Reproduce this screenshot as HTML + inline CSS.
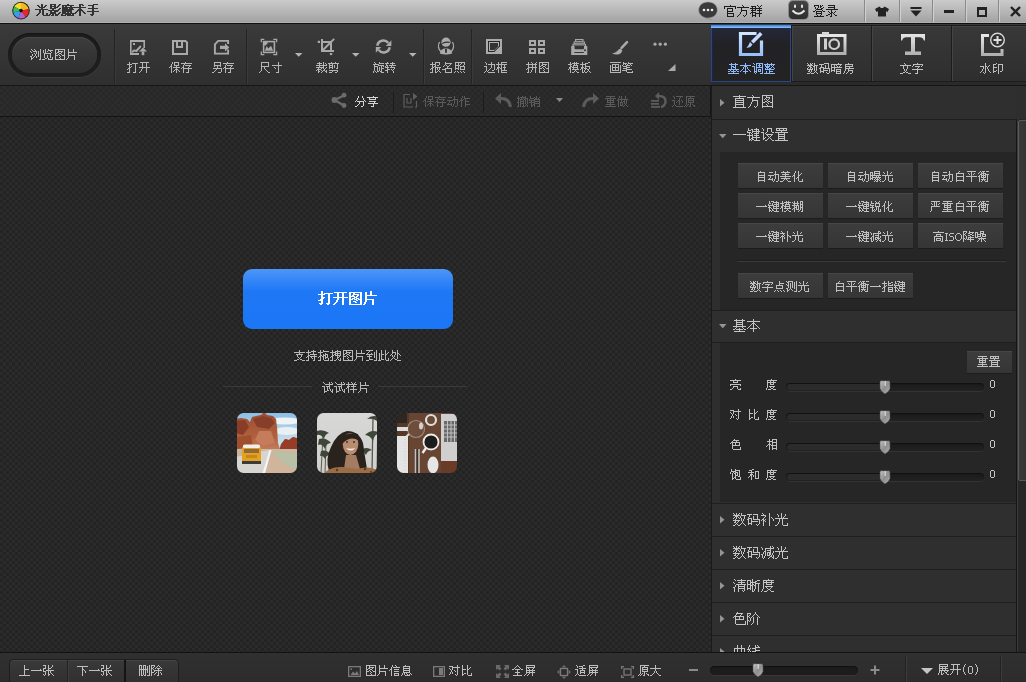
<!DOCTYPE html><html><head><meta charset="utf-8">
<style>
*{margin:0;padding:0;box-sizing:border-box}
html,body{width:1026px;height:682px;overflow:hidden;background:#2a2a2a;font-family:"Liberation Sans",sans-serif;font-size:12px;color:#bebebe}
.a{position:absolute}
.t{position:absolute;white-space:nowrap;line-height:12px;font-size:12px}
#title{left:0;top:0;width:1026px;height:23px;background:linear-gradient(#cbcbcb,#a3a3a3 95%,#b0b0b0 95%);}
#tline{left:0;top:23px;width:1026px;height:1px;background:#101010}
#tb{left:0;top:24px;width:1026px;height:61px;background:linear-gradient(#3a3a3a,#2f2f2f)}
#tbline{left:0;top:85px;width:1026px;height:1px;background:#161616}
.checker{background-color:#232323;background-image:conic-gradient(#2b2b2b 25%,#232323 0 50%,#2b2b2b 0 75%,#232323 0);background-size:6px 6px;background-position:0 0}
#canvas{left:0;top:86px;width:711px;height:566px}
#tb2{left:0;top:116px;width:711px;height:1px;background:#141414}
#panel{left:711px;top:86px;width:315px;height:566px;background:#2e2e2e}
#status{left:0;top:652px;width:1026px;height:30px;background:linear-gradient(#303030,#2c2c2c);border-top:1px solid #121212}
.lbl{position:absolute;white-space:nowrap;line-height:12px;font-size:12px;color:#c4c4c4}
.sep{position:absolute;width:1px;background:#242424;box-shadow:1px 0 0 #3a3a3a}
.wsep{position:absolute;top:0;width:1px;height:22px;background:#8a8a8a;box-shadow:1px 0 0 #d0d0d0}
svg{position:absolute;overflow:visible}
.hdr{left:712px;width:304px;background:#2f2f2f}
.hline{left:712px;width:304px;height:1px;background:#1f1f1f}
.btn{position:absolute;width:85px;height:25px;line-height:26px;text-align:center;font-size:12px;color:#c0c0c0;background:linear-gradient(#3d3d3d,#353535);box-shadow:inset 0 1px 0 #464646,0 1px 0 #1c1c1c;white-space:nowrap}
.track{position:absolute;width:198px;height:8px;border-radius:4px;background:linear-gradient(#1a1a1a,#222);box-shadow:inset 0 1px 1px #111,0 1px 0 #333}

</style></head><body>
<!-- TITLE BAR -->
<div id="title" class="a"></div>
<div id="tline" class="a"></div>
<svg style="left:11px;top:1px" width="20" height="20" viewBox="0 0 20 20">
 <circle cx="10" cy="9.6" r="8.8" fill="#1e1e1e"></circle>
 <path d="M10 9.6 L10 1.8 A7.8 7.8 0 0 1 17.6 8.2Z" fill="#f5b818"></path>
 <path d="M10 9.6 L3.3 5.6 A7.8 7.8 0 0 1 10 1.8Z" fill="#f6dc30"></path>
 <path d="M10 9.6 L17.6 8.2 A7.8 7.8 0 0 1 14.6 15.9Z" fill="#e22a2a"></path>
 <path d="M10 9.6 L14.6 15.9 A7.8 7.8 0 0 1 7.2 16.9Z" fill="#b260c8"></path>
 <path d="M10 9.6 L7.2 16.9 A7.8 7.8 0 0 1 2.3 11.5Z" fill="#3a9ef0"></path>
 <path d="M10 9.6 L2.3 11.5 A7.8 7.8 0 0 1 3.3 5.6Z" fill="#3cc052"></path>
 <circle cx="10" cy="9.6" r="1.8" fill="#111"></circle>
</svg>
<div class="t" style="left:35px;top:3px;font-size:13px;line-height:13px;font-weight:bold;color:#333"></div>

<svg style="left:698px;top:1px" width="21" height="19" viewBox="0 0 21 19"><path d="M10 1 C15.5 1 19.3 4.6 19.3 9 C19.3 13.4 15.5 17 10 17 L9.5 17 L14 19 L6.5 16.5 C3 15.3 0.7 12.5 0.7 9 C0.7 4.6 4.5 1 10 1Z" fill="#3a3a3a" stroke="#9a9a9a" stroke-width="0.6"></path><circle cx="6" cy="9" r="1.3" fill="#f0f0f0"></circle><circle cx="10" cy="9" r="1.3" fill="#f0f0f0"></circle><circle cx="14" cy="9" r="1.3" fill="#f0f0f0"></circle></svg>
<div class="t" style="left:724px;top:4px;font-size:13px;line-height:13px;color:#1c1c1c"></div>
<div class="a" style="left:789px;top:1px;width:19px;height:18px;border-radius:4px;background:linear-gradient(#444,#2e2e2e);box-shadow:0 0 0 1px #8a8a8a"></div>
<svg style="left:789px;top:1px" width="19" height="18"><rect x="5" y="3.5" width="2" height="3.5" rx="1" fill="#e6e6e6"></rect><rect x="12" y="3.5" width="2" height="3.5" rx="1" fill="#e6e6e6"></rect><path d="M3.5 9.5 Q9.5 16 15.5 9.5" stroke="#e6e6e6" stroke-width="2" fill="none"></path></svg>
<div class="t" style="left:813px;top:4px;font-size:13px;line-height:13px;color:#1c1c1c"></div>

<div class="wsep" style="left:864px"></div>
<div class="wsep" style="left:899px"></div>
<div class="wsep" style="left:932px"></div>
<div class="wsep" style="left:965px"></div>
<div class="wsep" style="left:998px"></div>
<svg style="left:875px;top:6px" width="14" height="11"><path d="M4.5 0.5 L6 2 L8 2 L9.5 0.5 L14 3 L12.5 6 L11 5.3 L11 10.5 L3 10.5 L3 5.3 L1.5 6 L0 3Z" fill="#222"></path></svg>
<svg style="left:910px;top:6px" width="12" height="11"><rect x="0.5" y="1" width="11" height="2" fill="#222"></rect><path d="M0.5 4.5 L11.5 4.5 L6 10.5Z" fill="#222"></path></svg>
<div class="a" style="left:944px;top:10px;width:10px;height:2.6px;background:#222"></div>
<div class="a" style="left:977px;top:7px;width:10px;height:9.5px;border:2px solid #222;border-top-width:3px"></div>
<svg style="left:1010px;top:6px" width="11" height="11"><path d="M1 1 L10 10 M10 1 L1 10" stroke="#222" stroke-width="2.4"></path></svg>

<!-- TOOLBAR -->
<div id="tb" class="a"></div>
<div id="tbline" class="a"></div>
<!-- browse button -->
<div class="a" style="left:8px;top:33px;width:93px;height:44px;border-radius:22px;background:#1d1d1d;box-shadow:inset 0 1px 1px #151515,0 1px 0 #3a3a3a"></div>
<div class="a" style="left:12px;top:37px;width:85px;height:36px;border-radius:18px;background:linear-gradient(#3c3c3c,#2e2e2e);box-shadow:inset 0 1px 0 #484848"></div>
<div class="t" style="left:30px;top:48px;color:#bdbdbd"></div>
<div class="sep" style="left:114px;top:29px;height:55px"></div>
<div class="sep" style="left:246px;top:29px;height:55px"></div>
<div class="sep" style="left:423px;top:29px;height:55px"></div>
<div class="sep" style="left:471px;top:29px;height:55px"></div>
<!-- icons -->
<svg style="left:129px;top:39px" width="18" height="17" fill="#a9a9a9">
 <rect x="1" y="1" width="1.6" height="15"></rect><rect x="1" y="1" width="15" height="2"></rect><rect x="14.4" y="1" width="1.6" height="8"></rect><rect x="1" y="14" width="9" height="2"></rect>
 <rect x="4" y="4" width="2" height="2"></rect>
 <path d="M3.8 12.6 Q4.6 11.2 6 11.6 L7.4 12 L11.3 7.6" fill="none" stroke="#a9a9a9" stroke-width="2" stroke-linecap="round"></path>
 <path d="M10 12.6 L14 8.4 L18 12.6Z"></path><rect x="12.7" y="12.4" width="2.6" height="3.8"></rect>
</svg>
<svg style="left:172px;top:40px" width="16" height="16" fill="none" stroke="#a9a9a9" stroke-width="2">
 <path d="M1 1 L13.5 1 L15 2.5 L15 14 L1 14Z"></path><path d="M5 0 L5 7 L10 7 L10 0"></path>
</svg>
<svg style="left:213px;top:39px" width="17" height="17" fill="none" stroke="#a9a9a9" stroke-width="1.9">
 <path d="M15.1 5 V1.9 H5.2 L1.9 5.4 V14.6 H15.1 V10.5"></path>
 <path d="M7 6.8 L12 6.8 L12 4.2 L16.3 8.4 L12 12.6 L12 10.1 L7 10.1Z" fill="#a9a9a9" stroke="none"></path>
</svg>
<svg style="left:260px;top:38px" width="18" height="18" fill="none" stroke="#a9a9a9" stroke-width="1.3">
 <path d="M1.3 4.3 L1.3 1.3 L4.3 1.3 M13.3 1.3 L16.6 1.3 L16.6 4.3 M16.6 13.6 L16.6 16.6 L13.3 16.6 M4.3 16.6 L1.3 16.6 L1.3 13.6"></path>
 <rect x="3.6" y="3.6" width="10.8" height="10.8" stroke-width="1.6"></rect>
 <path d="M4.8 12.8 L6.8 8 L8.3 10.5 L11 7.8 L13.2 12.8Z" fill="#a9a9a9" stroke="none"></path><path d="M4 4 L7.5 4 L7.5 5.5 L5.5 7.5 L4 7.5Z" fill="#a9a9a9" stroke="none"></path>
</svg>
<svg style="left:295px;top:53px" width="8" height="4"><path d="M0 0 L7.5 0 L3.75 3.8Z" fill="#b4b4b4"></path></svg>
<svg style="left:317px;top:38px" width="18" height="18" fill="#a9a9a9">
 <rect x="4" y="1" width="2" height="13"></rect><rect x="4" y="12" width="13" height="2"></rect><rect x="5" y="3" width="10" height="2"></rect><rect x="13" y="3" width="2" height="9"></rect>
 <path d="M5.5 12.5 L13.5 4.5" stroke="#a9a9a9" stroke-width="2"></path><path d="M14 4 L17.2 0.8" stroke="#a9a9a9" stroke-width="1.8"></path>
 <rect x="0.7" y="2.8" width="2.3" height="2.2"></rect><rect x="12.9" y="15" width="2.3" height="2.1"></rect>
</svg>
<svg style="left:352px;top:53px" width="8" height="4"><path d="M0 0 L7.5 0 L3.75 3.8Z" fill="#b4b4b4"></path></svg>
<svg style="left:376px;top:39px" width="16" height="16" fill="none" stroke="#a9a9a9" stroke-width="2.5">
 <path d="M1.3 6.8 A6.2 6.2 0 0 1 12.3 4"></path><path d="M13.7 8.2 A6.2 6.2 0 0 1 2.7 11"></path>
 <path d="M9.8 6.9 L15.4 6.9 L15.4 1.3Z" fill="#a9a9a9" stroke="none"></path><path d="M5.2 8.1 L-0.2 8.1 L-0.2 13.7Z" fill="#a9a9a9" stroke="none"></path>
</svg>
<svg style="left:409px;top:53px" width="8" height="4"><path d="M0 0 L7.5 0 L3.75 3.8Z" fill="#b4b4b4"></path></svg>
<svg style="left:437px;top:37px" width="18" height="18">
 <path d="M2.6 5 A7.6 7.6 0 1 0 15.4 5" fill="none" stroke="#a9a9a9" stroke-width="1.3"></path>
 <path d="M4.4 10.5 L4 6" stroke="#333" stroke-width="1.5"></path><path d="M13.6 10.5 L14 6" stroke="#333" stroke-width="1.5"></path>
 <circle cx="9" cy="5.2" r="4.6" fill="#ababab"></circle><path d="M5.2 6.4 Q9 4.6 12.6 5.4" stroke="#2e2e2e" stroke-width="1.1" fill="none"></path>
 <path d="M2.8 16.6 Q3.5 11.6 9 11.2 Q14.5 11.6 15.2 16.6 Q9 18.4 2.8 16.6Z" fill="#ababab"></path><rect x="8.1" y="11.8" width="1.8" height="4" fill="#2e2e2e"></rect>
</svg>
<svg style="left:486px;top:39px" width="16" height="15">
 <rect x="0" y="0" width="16" height="15" fill="#ababab"></rect><path d="M2 2H14V7.5L8.5 13H2Z" fill="#262626"></path><path d="M3 3H13V7L8 12H3Z" fill="#b0b0b0"></path><path d="M4 4H12V7.5L8.5 11H4Z" fill="#333"></path><path d="M14 7.5 L14 13 L8.5 13Z" fill="#ababab"></path>
</svg>
<svg style="left:529px;top:40px" width="16" height="14">
 <rect x="0" y="0" width="7" height="6" fill="#a9a9a9"></rect><rect x="9" y="0" width="7" height="6" fill="#a9a9a9"></rect><rect x="0" y="8" width="7" height="6" fill="#a9a9a9"></rect><rect x="9" y="8" width="7" height="6" fill="#a9a9a9"></rect>
 <rect x="2" y="2" width="3" height="2" fill="#333"></rect><rect x="11" y="2" width="3" height="2" fill="#333"></rect><rect x="2" y="10" width="3" height="2" fill="#333"></rect><rect x="11" y="10" width="3" height="2" fill="#333"></rect>
</svg>
<svg style="left:571px;top:39px" width="17" height="16" fill="#a9a9a9">
 <rect x="4" y="0" width="8.5" height="2.6"></rect><rect x="5.2" y="1" width="6.1" height="0.9" fill="#3a3a3a"></rect>
 <rect x="2.6" y="2.4" width="11.3" height="2.6"></rect><rect x="3.7" y="3.4" width="9.1" height="0.9" fill="#3a3a3a"></rect>
 <rect x="1.4" y="4.8" width="13.7" height="2.4"></rect><rect x="2.5" y="5.7" width="11.5" height="0.9" fill="#3a3a3a"></rect>
 <rect x="0.2" y="7" width="16.1" height="9"></rect><path d="M3.5 7 H13 V9.2 Q13 10.2 12 10.2 H4.5 Q3.5 10.2 3.5 9.2Z" fill="#333"></path>
 <rect x="3.3" y="13" width="9.5" height="1" fill="#333"></rect><circle cx="14" cy="11.2" r="1" fill="#333"></circle>
</svg>
<svg style="left:612px;top:41px" width="16" height="14" fill="#a9a9a9">
 <path d="M15 1.2 L9.6 6.8" stroke="#a9a9a9" stroke-width="2.6" stroke-linecap="round"></path>
 <path d="M0 12.6 Q3 12 5 10.2 Q7 8 8.6 7.6 L10.4 9.6 Q9.8 12 7.6 13 Q4 14.2 0 12.6Z"></path>
</svg>
<svg style="left:653px;top:42px" width="15" height="5"><circle cx="2" cy="2.2" r="1.6" fill="#a9a9a9"></circle><circle cx="7.2" cy="2.2" r="1.6" fill="#a9a9a9"></circle><circle cx="12.4" cy="2.2" r="1.6" fill="#a9a9a9"></circle></svg>
<svg style="left:668px;top:64px" width="8" height="7"><path d="M7.5 0 L7.5 7 L0 7Z" fill="#a9a9a9"></path></svg>
<!-- labels -->
<div class="t" style="left:127px;top:61px;color:#b6b6b6"></div>
<div class="t" style="left:169px;top:61px;color:#b6b6b6"></div>
<div class="t" style="left:211px;top:61px;color:#b6b6b6"></div>
<div class="t" style="left:259px;top:61px;color:#b6b6b6"></div>
<div class="t" style="left:316px;top:61px;color:#b6b6b6"></div>
<div class="t" style="left:373px;top:61px;color:#b6b6b6"></div>
<div class="t" style="left:430px;top:61px;color:#b6b6b6"></div>
<div class="t" style="left:484px;top:61px;color:#b6b6b6"></div>
<div class="t" style="left:526px;top:61px;color:#b6b6b6"></div>
<div class="t" style="left:568px;top:61px;color:#b6b6b6"></div>
<div class="t" style="left:610px;top:61px;color:#b6b6b6"></div>



<!-- RIGHT TABS -->
<div class="a" style="left:791px;top:25px;width:81px;height:57px;background:linear-gradient(#383838,#2e2e2e);border:1px solid #1c1c1c;box-shadow:inset 1px 1px 0 #444"></div>
<div class="a" style="left:871px;top:25px;width:81px;height:57px;background:linear-gradient(#383838,#2e2e2e);border:1px solid #1c1c1c;box-shadow:inset 1px 1px 0 #444"></div>
<div class="a" style="left:951px;top:25px;width:80px;height:57px;background:linear-gradient(#383838,#2e2e2e);border:1px solid #1c1c1c;box-shadow:inset 1px 1px 0 #444"></div>
<div class="a" style="left:711px;top:25px;width:80px;height:57px;background:linear-gradient(#25283c 0px,#222226 18px,#232323);border:1px solid #2a4488;border-top:none;box-shadow:inset 1px 0 0 #1a2450"></div>
<div class="a" style="left:711px;top:25px;width:80px;height:3px;background:linear-gradient(#2e7ee8,#8cc8ff)"></div>
<div class="a" style="left:711px;top:82px;width:315px;height:3px;background:#2a2a2a"></div>
<svg style="left:739px;top:32px" width="25" height="25">
 <defs><linearGradient id="bg1" x1="0" y1="0" x2="0" y2="1"><stop offset="0" stop-color="#d0e6ff"></stop><stop offset="1" stop-color="#98c0f8"></stop></linearGradient></defs>
 <path d="M17.5 1.5 L1.5 1.5 L1.5 22.5 L22.5 22.5 L22.5 8.5" fill="none" stroke="url(#bg1)" stroke-width="3.2"></path>
 <path d="M23.5 2.5 L21 0 L12 9 L14.5 11.5Z" fill="#c4dcff"></path><path d="M11 10 L13.5 12.5 Q12 15.5 7.5 16 Q10 13 11 10Z" fill="#b0d0ff"></path>
</svg>
<div class="t" style="left:728px;top:62px;color:#8fb8f8"></div>
<svg style="left:817px;top:32px" width="30" height="24">
 <defs><linearGradient id="gg" x1="0" y1="0" x2="0" y2="1"><stop offset="0" stop-color="#e6e6e6"></stop><stop offset="1" stop-color="#b0b0b0"></stop></linearGradient></defs>
 <rect x="1.5" y="3.5" width="26.5" height="18" fill="none" stroke="url(#gg)" stroke-width="3"></rect><rect x="5" y="0" width="7" height="3" fill="#d8d8d8"></rect>
 <rect x="7" y="6.5" width="3" height="11" fill="#cfcfcf"></rect><circle cx="17.2" cy="12.2" r="4.8" fill="none" stroke="#cfcfcf" stroke-width="2.2"></circle>
</svg>
<div class="t" style="left:807px;top:62px"></div>
<svg style="left:901px;top:34px" width="24" height="21">
 <path d="M0 0 L24 0 L24 6.5 L22.8 6.5 Q22 3.2 18.5 3.2 L14 3.2 L14 17.6 L20 17.6 L20 21 L4 21 L4 17.6 L10 17.6 L10 3.2 L5.5 3.2 Q2 3.2 1.2 6.5 L0 6.5Z" fill="url(#gg)"></path>
</svg>
<div class="t" style="left:900px;top:62px"></div>
<svg style="left:981px;top:32px" width="24" height="25">
 <path d="M8 3.5 L1.5 3.5 L1.5 22.5 L21 22.5 L21 17" fill="none" stroke="url(#gg)" stroke-width="3"></path>
 <circle cx="16.5" cy="8" r="6.8" fill="#303030" stroke="#d6d6d6" stroke-width="1.4"></circle><path d="M16.5 4 L16.5 12 M12.5 8 L20.5 8" stroke="#e0e0e0" stroke-width="2"></path>
</svg>
<div class="t" style="left:980px;top:62px"></div>

<!-- CANVAS -->
<div class="a checker" style="left:0;top:86px;width:711px;height:279px"></div><div class="a checker" style="left:0;top:365px;width:711px;height:287px;background-position:0 -2px"></div>
<div id="tb2" class="a"></div>

<div class="a" style="left:243px;top:269px;width:210px;height:60px;border-radius:9px;background:linear-gradient(#4d96f8 0px,#1e78f6 22px,#1b76f5 60px)"></div>
<div class="t" style="left:318px;top:291px;font-size:15px;line-height:15px;font-weight:bold;color:#fff"></div>
<div class="t" style="left:294px;top:349px;color:#b8b8b8"></div>
<div class="t" style="left:322px;top:381px;color:#b8b8b8"></div>
<div class="a" style="left:223px;top:386px;width:89px;height:1px;background:#3a3a3a"></div>
<div class="a" style="left:378px;top:386px;width:89px;height:1px;background:#3a3a3a"></div>
<svg style="left:237px;top:413px" width="60" height="60" viewBox="0 0 60 60">
 <defs><clipPath id="c1"><rect width="60" height="60" rx="6.5"></rect></clipPath>
 <linearGradient id="sky" x1="0" y1="0" x2="0" y2="1"><stop offset="0" stop-color="#86bde6"></stop><stop offset="0.45" stop-color="#c6dcea"></stop><stop offset="1" stop-color="#e2e8ec"></stop></linearGradient>
 <linearGradient id="rock" x1="0" y1="0" x2="0" y2="1"><stop offset="0" stop-color="#9c4c30"></stop><stop offset="0.6" stop-color="#b0603e"></stop><stop offset="1" stop-color="#c88462"></stop></linearGradient>
 <filter id="bl" x="-10%" y="-10%" width="120%" height="120%"><feGaussianBlur stdDeviation="0.7"></feGaussianBlur></filter></defs>
 <g clip-path="url(#c1)"><g filter="url(#bl)">
  <rect x="-2" y="-2" width="64" height="64" fill="url(#sky)"></rect>
  <ellipse cx="48" cy="8" rx="16" ry="3.5" fill="#eef3f6"></ellipse><ellipse cx="50" cy="18" rx="13" ry="4" fill="#e9eff3"></ellipse>
  <path d="M-2 6 L4 5 L10 6 L13 9 L15 4 L19 3 L24 2 L27 -1 L30 2 L36 3 L39 6 L40 14 L41 30 L43 36 L46 30 L48 26 L52 27 L56 24 L60 25 L62 26 L62 40 L-2 40Z" fill="url(#rock)"></path>
  <path d="M-2 8 L8 7 L12 14 L6 22 L-2 20Z" fill="#8a3e26"></path>
  <path d="M16 6 L26 3 L34 5 L38 10 L32 16 L20 14Z" fill="#86402a"></path>
  <path d="M22 18 L34 18 L38 30 L26 33 L18 27Z" fill="#c47c5a"></path>
  <path d="M0 24 L14 22 L16 34 L0 36Z" fill="#a0502f"></path>
  <path d="M44 31 L48 26 L52 27 L56 24 L62 26 L62 38 L42 38Z" fill="#953e26"></path>
  <rect x="-2" y="36" width="64" height="26" fill="#cbb9a6"></rect>
  <path d="M34 37 L62 39 L62 62 L30 62Z" fill="#d0b49c"></path>
  <path d="M36 38 L62 41 L62 58 L52 54 L40 44Z" fill="#b8c0a6"></path>
  <path d="M-2 42 L34 37 L26 62 L-2 62Z" fill="#d8d4d0"></path>
  <path d="M32.5 37 L34.5 37 L27.5 62 L25 62Z" fill="#f6f6f6"></path>
  <path d="M-2 38 L12 36 L10 42 L-2 44Z" fill="#c8b49c"></path>
  <rect x="5" y="33" width="19" height="17" rx="2.5" fill="#e3a020"></rect>
  <rect x="6" y="31.5" width="17" height="3.5" rx="1.5" fill="#f2f0ea"></rect>
  <rect x="7" y="36" width="15" height="4" fill="#8e6a3a"></rect>
  <rect x="9" y="42" width="11" height="3" fill="#c88818"></rect>
  <rect x="5" y="48" width="19" height="3" fill="#3a3a3a"></rect>
 </g></g>
</svg>
<svg style="left:317px;top:413px" width="60" height="60" viewBox="0 0 60 60">
 <defs><clipPath id="c2"><rect width="60" height="60" rx="6.5"></rect></clipPath>
 <linearGradient id="bg2" x1="0" y1="0" x2="0" y2="1"><stop offset="0" stop-color="#d8d8d6"></stop><stop offset="1" stop-color="#cfd0ce"></stop></linearGradient></defs>
 <g clip-path="url(#c2)"><g filter="url(#bl)">
  <rect x="-2" y="-2" width="64" height="64" fill="url(#bg2)"></rect>
  <path d="M56 4 L55 60" stroke="#5a5a4a" stroke-width="1.3"></path><path d="M61 3 L60 60" stroke="#6a6a5a" stroke-width="1.2"></path>
  <path d="M50 6 Q55 1 62 4 L60 8 Q56 5 50 6Z" fill="#3c4638"></path>
  <path d="M48 22 Q55 15 63 20 Q57 21 56 28 Q53 22 48 22Z" fill="#3c4638"></path>
  <path d="M6 22 L4 60 M9 28 L8 60" stroke="#5a5a4a" stroke-width="1"></path>
  <path d="M0 18 Q6 16 12 20 Q8 21 7 26 Q4 21 0 22Z" fill="#3c4638"></path>
  <path d="M2 26 Q9 24 14 30 Q9 30 8 36 Q5 30 1 32Z" fill="#3c4638"></path>
  <path d="M4 38 Q10 36 14 42 Q9 42 8 46 Q6 42 3 43Z" fill="#3c4638"></path>
  <path d="M44 37 Q49 33 55 37 Q50 38 49 42 Q47 38 44 37Z" fill="#3c4638"></path>
  <path d="M12 58 Q8 46 14 34 Q20 20 30 18 Q42 18 46 30 Q48 44 50 56 L40 60 L14 60Z" fill="#2a221e"></path>
  <ellipse cx="33.5" cy="31" rx="7.8" ry="11" fill="#b88c6e"></ellipse><circle cx="30" cy="29" r="0.9" fill="#3a2a22"></circle><circle cx="37" cy="29" r="0.9" fill="#3a2a22"></circle>
  <path d="M24 27 Q29 18 41 21 L42 28 Q34 22 25 31Z" fill="#2a221e"></path>
  <path d="M29 35 Q33.5 40 38.5 35 Q33.5 36.5 29 35Z" fill="#f2eae4"></path>
  <path d="M29 42 L39 42 L43 56 L27 56Z" fill="#a47c62"></path>
  <path d="M6 62 Q12 53 26 54 L40 56 Q52 52 62 58 L62 62Z" fill="#9c6c44"></path>
  <circle cx="20" cy="57" r="1.2" fill="#5a3a22"></circle><circle cx="48" cy="56" r="1.2" fill="#5a3a22"></circle><circle cx="54" cy="59" r="1" fill="#5a3a22"></circle>
 </g></g>
</svg>
<svg style="left:397px;top:413px" width="60" height="60" viewBox="0 0 60 60">
 <defs><clipPath id="c3"><rect width="60" height="60" rx="6.5"></rect></clipPath></defs>
 <g clip-path="url(#c3)"><g filter="url(#bl)">
  <rect x="-2" y="-2" width="64" height="64" fill="#674430"></rect>
  <rect x="-2" y="-2" width="14" height="64" fill="#553826"></rect>
  <rect x="-2" y="-2" width="12" height="12" fill="#2e2824"></rect>
  <rect x="44" y="1" width="18" height="47" fill="#cfcfcf"></rect>
  <rect x="47" y="8" width="15" height="21" fill="#6a6a6a"></rect>
  <path d="M47 12 L62 12 M47 16 L62 16 M47 20 L62 20 M47 24 L62 24" stroke="#c8c8c8" stroke-width="0.9"></path>
  <path d="M50.5 8 L50.5 29 M54 8 L54 29 M57.5 8 L57.5 29" stroke="#c8c8c8" stroke-width="0.9"></path>
  <rect x="44" y="48" width="18" height="14" fill="#6a3a26"></rect>
  <circle cx="19" cy="16" r="8.5" fill="#6e4e3a" stroke="#9a8a7e" stroke-width="1.2"></circle>
  <ellipse cx="24" cy="13" rx="2" ry="3.5" fill="#d6d0ca"></ellipse>
  <path d="M12 21 L8 25" stroke="#dcdcdc" stroke-width="2"></path>
  <circle cx="34" cy="7" r="5" fill="#6a4a36" stroke="#dedede" stroke-width="2.2"></circle>
  <rect x="-2" y="14" width="13" height="4" fill="#dedede"></rect>
  <rect x="0" y="23" width="11" height="39" fill="#e4e4e4"></rect>
  <path d="M8 26 L8 60" stroke="#bdbdbd" stroke-width="0.6" stroke-dasharray="1 2"></path>
  <circle cx="34" cy="29" r="7.5" fill="#1c1c1c" stroke="#ececec" stroke-width="1.8"></circle>
  <path d="M29 35 L25.5 40" stroke="#ececec" stroke-width="2.4"></path>
  <ellipse cx="36" cy="52" rx="5.5" ry="8.5" fill="#e6e6e6"></ellipse>
  <path d="M18.5 36 L18.5 62 M22 36 L22 62" stroke="#c0c0c0" stroke-width="1.5"></path>
  <path d="M20.2 36 L20.2 62" stroke="#2a2a2a" stroke-width="1"></path>
 </g></g>
</svg>




<!-- TB2 -->
<div class="a" style="left:0;top:86px;width:710px;height:30px;background:rgba(46,46,46,0.55)"></div><div class="a" style="left:710px;top:86px;width:1px;height:31px;background:#161616"></div>
<div class="a" style="left:0;top:85px;width:711px;height:1px;background:#161616"></div>
<svg style="left:331px;top:92px" width="17" height="17">
 <path d="M3.5 8 L13 3.5 M3.5 8 L13 13.5" stroke="#6c6c6c" stroke-width="2.2"></path><circle cx="3.5" cy="8" r="3" fill="#6c6c6c"></circle><circle cx="13" cy="3.2" r="2.4" fill="#6c6c6c"></circle><circle cx="13" cy="13.5" r="2.4" fill="#6c6c6c"></circle>
</svg>
<div class="t" style="left:355px;top:95px;color:#d4d4d4"></div>
<div class="a" style="left:393px;top:92px;width:1px;height:21px;background:#1b1b1b"></div>
<svg style="left:403px;top:93px" width="15" height="15" fill="none" stroke="#5e5e5e" stroke-width="1.2">
 <path d="M7 1.5 L1 1.5 L1 14 L10 14"></path><path d="M13.5 8 L13.5 14 L12 14"></path><path d="M4 5 L4 10 L8 10 L8 5"></path><path d="M10 0 L14.5 3.5 L10 7Z" fill="#5e5e5e" stroke="none"></path>
</svg>
<div class="t" style="left:423px;top:95px;color:#5a5a5a"></div>
<div class="a" style="left:483px;top:92px;width:1px;height:21px;background:#1b1b1b"></div>
<svg style="left:495px;top:93px" width="17" height="15">
 <path d="M6 0 L0 5.5 L6 11Z" fill="#5c5c5c"></path><path d="M5 5.5 Q14 4.5 15.5 14" fill="none" stroke="#5c5c5c" stroke-width="3"></path>
</svg>
<div class="t" style="left:517px;top:95px;color:#5a5a5a"></div>
<svg style="left:556px;top:98px" width="8" height="5"><path d="M0 0 L7 0 L3.5 4Z" fill="#8a8a8a"></path></svg>
<svg style="left:582px;top:93px" width="17" height="15">
 <path d="M11 0 L17 5.5 L11 11Z" fill="#5c5c5c"></path><path d="M12 5.5 Q3 4.5 1.5 14" fill="none" stroke="#5c5c5c" stroke-width="3"></path>
</svg>
<div class="t" style="left:605px;top:95px;color:#5a5a5a"></div>
<svg style="left:651px;top:92px" width="16" height="16">
 <path d="M8 0 L8 8 L4 4Z" fill="#5c5c5c"></path><path d="M8 4 Q15 4 14.5 10 Q14 14 10 15" fill="none" stroke="#5c5c5c" stroke-width="2.4"></path>
 <rect x="0" y="8" width="8" height="1.8" fill="#5c5c5c"></rect><rect x="0" y="11" width="8" height="1.8" fill="#5c5c5c"></rect><rect x="0" y="14" width="9" height="1.8" fill="#5c5c5c"></rect>
</svg>
<div class="t" style="left:672px;top:95px;color:#5a5a5a"></div>

<!-- PANEL -->
<div id="panel" class="a"></div>
<div class="a" style="left:711px;top:86px;width:1px;height:566px;background:#1a1a1a"></div>
<div class="a hdr" style="top:86px;height:33px"></div><div class="a hline" style="top:119px"></div><svg style="left:720px;top:99px" width="5" height="8"><path d="M0 0 L4.5 3.75 L0 7.5Z" fill="#959595"></path></svg><div class="t" style="left:733px;top:95px;font-size:14px;line-height:14px;color:#c4c4c4"></div>
<div class="a hdr" style="top:120px;height:32px"></div><svg style="left:719px;top:134px" width="8" height="5"><path d="M0 0 L7.5 0 L3.75 4.2Z" fill="#959595"></path></svg><div class="t" style="left:733px;top:128px;font-size:14px;line-height:14px;color:#c4c4c4"></div>
<div class="a" style="left:720px;top:152px;width:296px;height:158px;background:#262626"></div>
<div class="btn" style="left:738px;top:163px"></div>
<div class="btn" style="left:828px;top:163px"></div>
<div class="btn" style="left:918px;top:163px"></div>
<div class="btn" style="left:738px;top:193px"></div>
<div class="btn" style="left:828px;top:193px"></div>
<div class="btn" style="left:918px;top:193px"></div>
<div class="btn" style="left:738px;top:223px"></div>
<div class="btn" style="left:828px;top:223px"></div>
<div class="btn" style="left:918px;top:223px"></div>
<div class="a" style="left:737px;top:261px;width:269px;height:1px;background:#3a3a3a;box-shadow:0 -1px 0 #1e1e1e"></div>
<div class="btn" style="left:738px;top:273px"></div>
<div class="btn" style="left:828px;top:273px"></div>
<div class="a hline" style="top:310px"></div><div class="a hdr" style="top:311px;height:31px"></div><div class="a hline" style="top:342px"></div><svg style="left:719px;top:324px" width="8" height="5"><path d="M0 0 L7.5 0 L3.75 4.2Z" fill="#959595"></path></svg><div class="t" style="left:733px;top:319px;font-size:14px;line-height:14px;color:#c4c4c4"></div>
<div class="a" style="left:720px;top:343px;width:296px;height:159px;background:#262626"></div>
<div class="btn" style="left:967px;top:351px;width:45px;height:22px;line-height:21px;font-size:12px;text-indent:-2px"></div>
<div class="t" style="left:730px;top:378px;color:#c0c0c0"></div>
<div class="track" style="left:786px;top:383px"></div><div class="a" style="left:787px;top:384px;width:93px;height:6px;border-radius:3px 0 0 3px;background:#2b2b2b"></div>
<svg style="left:879px;top:380px" width="12" height="15"><defs><linearGradient id="th0" x1="0" y1="0" x2="1" y2="1"><stop offset="0" stop-color="#c4c4c4"></stop><stop offset="0.5" stop-color="#8e8e8e"></stop><stop offset="1" stop-color="#b4b4b4"></stop></linearGradient></defs><path d="M0.8 2 Q0.8 0.6 2.4 0.6 L9.6 0.6 Q11.2 0.6 11.2 2 L11.2 8.5 Q10.5 11.5 6 14.2 Q1.5 11.5 0.8 8.5Z" fill="url(#th0)" stroke="#1a1a1a" stroke-width="0.6"></path><rect x="5.6" y="1" width="1.2" height="5" fill="#d8d8d8"></rect></svg>
<div class="t" style="left:990px;top:377px;font-size:12px;line-height:12px;color:#c8c8c8"></div>
<div class="t" style="left:730px;top:408px;color:#c0c0c0"></div>
<div class="track" style="left:786px;top:413px"></div><div class="a" style="left:787px;top:414px;width:93px;height:6px;border-radius:3px 0 0 3px;background:#2b2b2b"></div>
<svg style="left:879px;top:410px" width="12" height="15"><defs><linearGradient id="th1" x1="0" y1="0" x2="1" y2="1"><stop offset="0" stop-color="#c4c4c4"></stop><stop offset="0.5" stop-color="#8e8e8e"></stop><stop offset="1" stop-color="#b4b4b4"></stop></linearGradient></defs><path d="M0.8 2 Q0.8 0.6 2.4 0.6 L9.6 0.6 Q11.2 0.6 11.2 2 L11.2 8.5 Q10.5 11.5 6 14.2 Q1.5 11.5 0.8 8.5Z" fill="url(#th1)" stroke="#1a1a1a" stroke-width="0.6"></path><rect x="5.6" y="1" width="1.2" height="5" fill="#d8d8d8"></rect></svg>
<div class="t" style="left:990px;top:407px;font-size:12px;line-height:12px;color:#c8c8c8"></div>
<div class="t" style="left:730px;top:438px;color:#c0c0c0"></div>
<div class="track" style="left:786px;top:443px"></div><div class="a" style="left:787px;top:444px;width:93px;height:6px;border-radius:3px 0 0 3px;background:#2b2b2b"></div>
<svg style="left:879px;top:440px" width="12" height="15"><defs><linearGradient id="th2" x1="0" y1="0" x2="1" y2="1"><stop offset="0" stop-color="#c4c4c4"></stop><stop offset="0.5" stop-color="#8e8e8e"></stop><stop offset="1" stop-color="#b4b4b4"></stop></linearGradient></defs><path d="M0.8 2 Q0.8 0.6 2.4 0.6 L9.6 0.6 Q11.2 0.6 11.2 2 L11.2 8.5 Q10.5 11.5 6 14.2 Q1.5 11.5 0.8 8.5Z" fill="url(#th2)" stroke="#1a1a1a" stroke-width="0.6"></path><rect x="5.6" y="1" width="1.2" height="5" fill="#d8d8d8"></rect></svg>
<div class="t" style="left:990px;top:437px;font-size:12px;line-height:12px;color:#c8c8c8"></div>
<div class="t" style="left:730px;top:468px;color:#c0c0c0"></div>
<div class="track" style="left:786px;top:473px"></div><div class="a" style="left:787px;top:474px;width:93px;height:6px;border-radius:3px 0 0 3px;background:#2b2b2b"></div>
<svg style="left:879px;top:470px" width="12" height="15"><defs><linearGradient id="th3" x1="0" y1="0" x2="1" y2="1"><stop offset="0" stop-color="#c4c4c4"></stop><stop offset="0.5" stop-color="#8e8e8e"></stop><stop offset="1" stop-color="#b4b4b4"></stop></linearGradient></defs><path d="M0.8 2 Q0.8 0.6 2.4 0.6 L9.6 0.6 Q11.2 0.6 11.2 2 L11.2 8.5 Q10.5 11.5 6 14.2 Q1.5 11.5 0.8 8.5Z" fill="url(#th3)" stroke="#1a1a1a" stroke-width="0.6"></path><rect x="5.6" y="1" width="1.2" height="5" fill="#d8d8d8"></rect></svg>
<div class="t" style="left:990px;top:467px;font-size:12px;line-height:12px;color:#c8c8c8"></div>
<div class="a hline" style="top:503px"></div><div class="a hdr" style="top:504px;height:32px"></div><div class="a hline" style="top:536px"></div><svg style="left:720px;top:516px" width="5" height="8"><path d="M0 0 L4.5 3.75 L0 7.5Z" fill="#959595"></path></svg><div class="t" style="left:733px;top:513px;font-size:14px;line-height:14px;color:#c4c4c4"></div>
<div class="a hdr" style="top:537px;height:32px"></div><div class="a hline" style="top:569px"></div><svg style="left:720px;top:549px" width="5" height="8"><path d="M0 0 L4.5 3.75 L0 7.5Z" fill="#959595"></path></svg><div class="t" style="left:733px;top:546px;font-size:14px;line-height:14px;color:#c4c4c4"></div>
<div class="a hdr" style="top:570px;height:32px"></div><div class="a hline" style="top:602px"></div><svg style="left:720px;top:582px" width="5" height="8"><path d="M0 0 L4.5 3.75 L0 7.5Z" fill="#959595"></path></svg><div class="t" style="left:733px;top:579px;font-size:14px;line-height:14px;color:#c4c4c4"></div>
<div class="a hdr" style="top:603px;height:32px"></div><div class="a hline" style="top:635px"></div><svg style="left:720px;top:615px" width="5" height="8"><path d="M0 0 L4.5 3.75 L0 7.5Z" fill="#959595"></path></svg><div class="t" style="left:733px;top:612px;font-size:14px;line-height:14px;color:#c4c4c4"></div>
<div class="a" style="left:0;top:0;width:1026px;height:652px;overflow:hidden"><div class="a hdr" style="top:636px;height:32px"></div><svg style="left:720px;top:648px" width="5" height="8"><path d="M0 0 L4.5 3.75 L0 7.5Z" fill="#959595"></path></svg><div class="t" style="left:733px;top:645px;font-size:14px;line-height:14px;color:#c4c4c4"></div></div>
<div class="a" style="left:1016px;top:119px;width:10px;height:533px;background:#272727;border-left:1px solid #151515;box-shadow:inset 1px 0 0 #3a3a3a"></div>
<div class="a" style="left:1018px;top:120px;width:10px;height:361px;background:linear-gradient(90deg,#3a3a3a,#343434);border:1px solid #5a5a5a;border-radius:2px"></div>

<!-- STATUS -->
<div id="status" class="a"></div>

<div class="a" style="left:9px;top:659px;width:170px;height:24px;border-radius:4px 4px 0 0;background:linear-gradient(#393939,#303030);border:1px solid #1e1e1e;box-shadow:inset 0 1px 0 #444"></div>
<div class="a" style="left:67px;top:660px;width:1px;height:22px;background:#222;box-shadow:1px 0 0 #3e3e3e"></div>
<div class="a" style="left:124px;top:660px;width:2px;height:22px;background:#141414"></div>
<div class="t" style="left:19px;top:664px"></div>
<div class="t" style="left:77px;top:664px"></div>
<div class="t" style="left:139px;top:664px"></div>
<svg style="left:348px;top:666px" width="13" height="11" fill="none" stroke="#7a7a7a" stroke-width="1.3"><rect x="0.65" y="0.65" width="11.7" height="9.7"></rect><path d="M2.5 9 L5 5.5 L7 7.5 L9 5 L11 9Z" fill="#7a7a7a" stroke="none"></path><rect x="2.5" y="2.5" width="1.5" height="1.5" fill="#7a7a7a" stroke="none"></rect></svg>
<div class="t" style="left:365px;top:664px"></div>
<svg style="left:433px;top:666px" width="12" height="11"><rect x="0.65" y="0.65" width="10.7" height="9.7" fill="none" stroke="#7a7a7a" stroke-width="1.3"></rect><rect x="6" y="2" width="4" height="7" fill="#7a7a7a"></rect></svg>
<div class="t" style="left:449px;top:664px"></div>
<svg style="left:496px;top:665px" width="13" height="13" fill="#6a6a6a"><path d="M0 0 L5 0 L3.5 1.5 L5.5 3.5 L3.5 5.5 L1.5 3.5 L0 5Z"></path><path d="M13 0 L8 0 L9.5 1.5 L7.5 3.5 L9.5 5.5 L11.5 3.5 L13 5Z"></path><path d="M0 13 L5 13 L3.5 11.5 L5.5 9.5 L3.5 7.5 L1.5 9.5 L0 8Z"></path><path d="M13 13 L8 13 L9.5 11.5 L7.5 9.5 L9.5 7.5 L11.5 9.5 L13 8Z"></path></svg>
<div class="t" style="left:512px;top:664px"></div>
<svg style="left:557px;top:665px" width="14" height="14" fill="#6a6a6a"><rect x="3.5" y="3.5" width="7" height="7" fill="none" stroke="#7a7a7a" stroke-width="1.3"></rect><path d="M7 0 L9.5 2.5 L4.5 2.5Z"></path><path d="M7 14 L9.5 11.5 L4.5 11.5Z"></path><path d="M0 7 L2.5 4.5 L2.5 9.5Z"></path><path d="M14 7 L11.5 4.5 L11.5 9.5Z"></path></svg>
<div class="t" style="left:575px;top:664px"></div>
<svg style="left:621px;top:666px" width="13" height="12" fill="none" stroke="#7a7a7a" stroke-width="1.3"><path d="M0.65 3 L0.65 0.65 L3 0.65 M10 0.65 L12.35 0.65 L12.35 3 M12.35 9 L12.35 11.35 L10 11.35 M3 11.35 L0.65 11.35 L0.65 9"></path><rect x="3" y="3" width="7" height="6"></rect></svg>
<div class="t" style="left:638px;top:664px"></div>
<div class="a" style="left:689px;top:669px;width:9px;height:2px;background:#8a8a8a"></div>
<div class="a" style="left:710px;top:666px;width:148px;height:9px;border-radius:5px;background:#1c1c1c;box-shadow:inset 0 1px 1px #111,0 1px 0 #383838"></div>
<svg style="left:752px;top:663px" width="12" height="15"><defs><linearGradient id="thz" x1="0" y1="0" x2="1" y2="1"><stop offset="0" stop-color="#c4c4c4"></stop><stop offset="0.5" stop-color="#8e8e8e"></stop><stop offset="1" stop-color="#b4b4b4"></stop></linearGradient></defs><path d="M0.8 2 Q0.8 0.6 2.4 0.6 L9.6 0.6 Q11.2 0.6 11.2 2 L11.2 8.5 Q10.5 11.5 6 14.2 Q1.5 11.5 0.8 8.5Z" fill="url(#thz)" stroke="#1a1a1a" stroke-width="0.6"></path><rect x="5.6" y="1" width="1.2" height="5" fill="#d8d8d8"></rect></svg>
<svg style="left:870px;top:665px" width="10" height="10"><path d="M5 0.5 L5 9.5 M0.5 5 L9.5 5" stroke="#8a8a8a" stroke-width="2"></path></svg>
<div class="a" style="left:905px;top:656px;width:1px;height:26px;background:#222;box-shadow:1px 0 0 #3c3c3c"></div>
<svg style="left:921px;top:668px" width="12" height="6"><path d="M0 0 L12 0 L6 6Z" fill="#c4c4c4"></path></svg>
<div class="t" style="left:938px;top:663px"></div>
<div class="a" style="left:1000px;top:656px;width:1px;height:26px;background:#222;box-shadow:1px 0 0 #3c3c3c"></div>


<svg width="1026" height="682" style="position:absolute;left:0;top:0;z-index:50;overflow:visible" shape-rendering="crispEdges"><defs><path id="g5149_13b" d="M6 0h2v1h-2zM2 1h2v1h-2zM6 1h2v1h-2zM10 1h2v1h-2zM3 2h2v1h-2zM6 2h2v1h-2zM9 2h2v1h-2zM4 3h6v1h-6zM6 4h2v1h-2zM0 5h13v1h-13zM4 6h2v1h-2zM7 6h2v1h-2zM4 7h2v1h-2zM7 7h2v1h-2zM4 8h2v1h-2zM7 8h2v1h-2zM3 9h2v1h-2zM7 9h2v1h-2zM11 9h2v1h-2zM2 10h2v1h-2zM7 10h2v1h-2zM11 10h2v1h-2zM1 11h2v1h-2zM8 11h5v1h-5z"></path><path id="g5f71_13b" d="M2 0h6v1h-6zM11 0h2v1h-2zM2 1h2v1h-2zM6 1h2v1h-2zM10 1h2v1h-2zM2 2h6v1h-6zM9 2h2v1h-2zM2 3h2v1h-2zM6 3h4v1h-4zM2 4h6v1h-6zM11 4h2v1h-2zM4 5h2v1h-2zM10 5h2v1h-2zM0 6h11v1h-11zM2 7h2v1h-2zM6 7h4v1h-4zM2 8h6v1h-6zM11 8h2v1h-2zM2 9h6v1h-6zM10 9h2v1h-2zM1 10h2v1h-2zM4 10h2v1h-2zM7 10h4v1h-4zM0 11h2v1h-2zM3 11h3v1h-3zM7 11h3v1h-3z"></path><path id="g9b54_13b" d="M6 0h2v1h-2zM1 1h12v1h-12zM1 2h2v1h-2zM4 2h2v1h-2zM9 2h2v1h-2zM1 3h12v1h-12zM1 4h6v1h-6zM8 4h4v1h-4zM1 5h12v1h-12zM1 6h10v1h-10zM1 7h10v1h-10zM1 8h4v1h-4zM6 8h2v1h-2zM9 8h2v1h-2zM1 9h12v1h-12zM0 10h2v1h-2zM4 10h6v1h-6zM11 10h2v1h-2zM0 11h5v1h-5zM6 11h7v1h-7z"></path><path id="g672f_13b" d="M5 0h4v1h-4zM5 1h2v1h-2zM8 1h2v1h-2zM5 2h2v1h-2zM0 3h12v1h-12zM5 4h2v1h-2zM4 5h4v1h-4zM3 6h6v1h-6zM2 7h2v1h-2zM5 7h2v1h-2zM8 7h2v1h-2zM1 8h2v1h-2zM5 8h2v1h-2zM9 8h2v1h-2zM0 9h2v1h-2zM5 9h2v1h-2zM10 9h2v1h-2zM5 10h2v1h-2zM5 11h2v1h-2z"></path><path id="g624b_13b" d="M6 0h5v1h-5zM1 1h6v1h-6zM5 2h2v1h-2zM5 3h2v1h-2zM1 4h10v1h-10zM5 5h2v1h-2zM5 6h2v1h-2zM0 7h12v1h-12zM5 8h2v1h-2zM5 9h2v1h-2zM3 10h4v1h-4zM4 11h2v1h-2z"></path><path id="g5b98_13" d="M6 0h1v1h-1zM0 1h12v1h-12zM0 2h1v1h-1zM11 2h1v1h-1zM0 3h1v1h-1zM3 3h6v1h-6zM11 3h1v1h-1zM3 4h1v1h-1zM8 4h1v1h-1zM3 5h1v1h-1zM8 5h1v1h-1zM3 6h6v1h-6zM3 7h1v1h-1zM3 8h7v1h-7zM3 9h1v1h-1zM9 9h1v1h-1zM3 10h1v1h-1zM9 10h1v1h-1zM3 11h7v1h-7z"></path><path id="g65b9_13" d="M5 0h1v1h-1zM6 1h1v1h-1zM0 2h12v1h-12zM4 3h1v1h-1zM4 4h1v1h-1zM4 5h6v1h-6zM4 6h1v1h-1zM9 6h1v1h-1zM3 7h1v1h-1zM9 7h1v1h-1zM3 8h1v1h-1zM9 8h1v1h-1zM2 9h1v1h-1zM9 9h1v1h-1zM1 10h1v1h-1zM6 10h1v1h-1zM8 10h1v1h-1zM0 11h1v1h-1zM7 11h1v1h-1z"></path><path id="g7fa4_13" d="M7 0h1v1h-1zM11 0h1v1h-1zM1 1h5v1h-5zM8 1h1v1h-1zM10 1h1v1h-1zM2 2h1v1h-1zM5 2h1v1h-1zM9 2h1v1h-1zM0 3h12v1h-12zM2 4h1v1h-1zM5 4h1v1h-1zM9 4h1v1h-1zM1 5h5v1h-5zM7 5h5v1h-5zM2 6h1v1h-1zM9 6h1v1h-1zM1 7h5v1h-5zM9 7h1v1h-1zM0 8h1v1h-1zM2 8h1v1h-1zM5 8h7v1h-7zM2 9h1v1h-1zM5 9h1v1h-1zM9 9h1v1h-1zM2 10h4v1h-4zM9 10h1v1h-1zM2 11h1v1h-1zM5 11h1v1h-1zM9 11h1v1h-1z"></path><path id="g767b_13" d="M1 0h5v1h-5zM7 0h1v1h-1zM9 0h1v1h-1zM1 1h1v1h-1zM5 1h1v1h-1zM7 1h2v1h-2zM2 2h1v1h-1zM5 2h1v1h-1zM7 2h1v1h-1zM10 2h1v1h-1zM2 3h1v1h-1zM4 3h1v1h-1zM8 3h2v1h-2zM3 4h6v1h-6zM2 5h1v1h-1zM9 5h1v1h-1zM0 6h2v1h-2zM3 6h6v1h-6zM10 6h2v1h-2zM3 7h1v1h-1zM8 7h1v1h-1zM3 8h6v1h-6zM3 9h1v1h-1zM8 9h1v1h-1zM4 10h1v1h-1zM7 10h1v1h-1zM1 11h10v1h-10z"></path><path id="g5f55_13" d="M2 0h7v1h-7zM8 1h1v1h-1zM2 2h7v1h-7zM8 3h1v1h-1zM0 4h12v1h-12zM5 5h1v1h-1zM2 6h1v1h-1zM5 6h1v1h-1zM9 6h1v1h-1zM3 7h1v1h-1zM5 7h2v1h-2zM8 7h1v1h-1zM4 8h2v1h-2zM7 8h1v1h-1zM2 9h2v1h-2zM5 9h1v1h-1zM8 9h1v1h-1zM0 10h2v1h-2zM5 10h1v1h-1zM9 10h2v1h-2zM4 11h2v1h-2z"></path><path id="g6d4f_12" d="M1 0h1v1h-1zM4 0h1v1h-1zM10 0h1v1h-1zM2 1h1v1h-1zM5 1h1v1h-1zM10 1h1v1h-1zM0 2h1v1h-1zM3 2h4v1h-4zM8 2h1v1h-1zM10 2h1v1h-1zM1 3h1v1h-1zM6 3h1v1h-1zM8 3h1v1h-1zM10 3h1v1h-1zM4 4h1v1h-1zM6 4h1v1h-1zM8 4h1v1h-1zM10 4h1v1h-1zM2 5h1v1h-1zM5 5h1v1h-1zM8 5h1v1h-1zM10 5h1v1h-1zM2 6h1v1h-1zM5 6h1v1h-1zM8 6h1v1h-1zM10 6h1v1h-1zM0 7h2v1h-2zM4 7h1v1h-1zM6 7h1v1h-1zM8 7h1v1h-1zM10 7h1v1h-1zM1 8h1v1h-1zM3 8h1v1h-1zM6 8h1v1h-1zM10 8h1v1h-1zM1 9h2v1h-2zM10 9h1v1h-1zM1 10h1v1h-1zM9 10h2v1h-2z"></path><path id="g89c8_12" d="M3 0h1v1h-1zM6 0h1v1h-1zM1 1h1v1h-1zM3 1h1v1h-1zM6 1h5v1h-5zM1 2h1v1h-1zM3 2h1v1h-1zM5 2h1v1h-1zM8 2h1v1h-1zM1 3h1v1h-1zM3 3h1v1h-1zM9 3h1v1h-1zM2 4h7v1h-7zM2 5h1v1h-1zM8 5h1v1h-1zM2 6h1v1h-1zM5 6h1v1h-1zM8 6h1v1h-1zM2 7h1v1h-1zM5 7h1v1h-1zM8 7h1v1h-1zM2 8h1v1h-1zM5 8h1v1h-1zM8 8h1v1h-1zM10 8h1v1h-1zM3 9h2v1h-2zM6 9h1v1h-1zM10 9h1v1h-1zM0 10h3v1h-3zM6 10h5v1h-5z"></path><path id="g56fe_12" d="M0 0h10v1h-10zM0 1h1v1h-1zM3 1h1v1h-1zM9 1h1v1h-1zM0 2h1v1h-1zM3 2h5v1h-5zM9 2h1v1h-1zM0 3h1v1h-1zM2 3h2v1h-2zM6 3h1v1h-1zM9 3h1v1h-1zM0 4h2v1h-2zM4 4h2v1h-2zM9 4h1v1h-1zM0 5h1v1h-1zM3 5h1v1h-1zM6 5h1v1h-1zM9 5h1v1h-1zM0 6h3v1h-3zM4 6h1v1h-1zM7 6h3v1h-3zM0 7h1v1h-1zM5 7h1v1h-1zM9 7h1v1h-1zM0 8h1v1h-1zM4 8h1v1h-1zM9 8h1v1h-1zM0 9h1v1h-1zM5 9h1v1h-1zM9 9h1v1h-1zM0 10h10v1h-10z"></path><path id="g7247_12" d="M2 0h1v1h-1zM7 0h1v1h-1zM2 1h1v1h-1zM7 1h1v1h-1zM2 2h1v1h-1zM7 2h1v1h-1zM2 3h9v1h-9zM2 4h1v1h-1zM2 5h1v1h-1zM2 6h7v1h-7zM2 7h1v1h-1zM8 7h1v1h-1zM2 8h1v1h-1zM8 8h1v1h-1zM1 9h1v1h-1zM8 9h1v1h-1zM0 10h1v1h-1zM8 10h1v1h-1z"></path><path id="g6253_12" d="M2 0h1v1h-1zM2 1h1v1h-1zM5 1h6v1h-6zM0 2h5v1h-5zM8 2h1v1h-1zM2 3h1v1h-1zM8 3h1v1h-1zM2 4h1v1h-1zM4 4h1v1h-1zM8 4h1v1h-1zM2 5h2v1h-2zM8 5h1v1h-1zM1 6h2v1h-2zM8 6h1v1h-1zM0 7h1v1h-1zM2 7h1v1h-1zM8 7h1v1h-1zM2 8h1v1h-1zM8 8h1v1h-1zM2 9h1v1h-1zM8 9h1v1h-1zM0 10h3v1h-3zM6 10h3v1h-3z"></path><path id="g5f00_12" d="M1 0h9v1h-9zM3 1h1v1h-1zM7 1h1v1h-1zM3 2h1v1h-1zM7 2h1v1h-1zM3 3h1v1h-1zM7 3h1v1h-1zM3 4h1v1h-1zM7 4h1v1h-1zM0 5h11v1h-11zM3 6h1v1h-1zM7 6h1v1h-1zM2 7h1v1h-1zM7 7h1v1h-1zM2 8h1v1h-1zM7 8h1v1h-1zM1 9h1v1h-1zM7 9h1v1h-1zM0 10h1v1h-1zM7 10h1v1h-1z"></path><path id="g4fdd_12" d="M3 0h1v1h-1zM5 0h5v1h-5zM3 1h1v1h-1zM5 1h1v1h-1zM9 1h1v1h-1zM2 2h1v1h-1zM5 2h1v1h-1zM9 2h1v1h-1zM2 3h1v1h-1zM5 3h5v1h-5zM1 4h2v1h-2zM7 4h1v1h-1zM0 5h1v1h-1zM2 5h1v1h-1zM4 5h7v1h-7zM2 6h1v1h-1zM7 6h1v1h-1zM2 7h1v1h-1zM6 7h3v1h-3zM2 8h1v1h-1zM5 8h1v1h-1zM7 8h1v1h-1zM9 8h1v1h-1zM2 9h1v1h-1zM4 9h1v1h-1zM7 9h1v1h-1zM10 9h1v1h-1zM2 10h1v1h-1zM7 10h1v1h-1z"></path><path id="g5b58_12" d="M4 0h1v1h-1zM0 1h11v1h-11zM3 2h1v1h-1zM2 3h1v1h-1zM4 3h6v1h-6zM2 4h1v1h-1zM8 4h1v1h-1zM1 5h2v1h-2zM7 5h1v1h-1zM0 6h1v1h-1zM2 6h9v1h-9zM2 7h1v1h-1zM7 7h1v1h-1zM2 8h1v1h-1zM7 8h1v1h-1zM2 9h1v1h-1zM7 9h1v1h-1zM2 10h1v1h-1zM5 10h3v1h-3z"></path><path id="g53e6_12" d="M2 0h7v1h-7zM2 1h1v1h-1zM8 1h1v1h-1zM2 2h1v1h-1zM8 2h1v1h-1zM2 3h7v1h-7zM2 4h1v1h-1zM5 4h1v1h-1zM8 4h1v1h-1zM5 5h1v1h-1zM1 6h9v1h-9zM4 7h1v1h-1zM9 7h1v1h-1zM3 8h1v1h-1zM9 8h1v1h-1zM2 9h1v1h-1zM9 9h1v1h-1zM0 10h2v1h-2zM6 10h3v1h-3z"></path><path id="g5c3a_12" d="M2 0h8v1h-8zM2 1h1v1h-1zM9 1h1v1h-1zM2 2h1v1h-1zM9 2h1v1h-1zM2 3h1v1h-1zM9 3h1v1h-1zM2 4h8v1h-8zM2 5h1v1h-1zM5 5h1v1h-1zM2 6h1v1h-1zM5 6h1v1h-1zM2 7h1v1h-1zM6 7h1v1h-1zM2 8h1v1h-1zM7 8h1v1h-1zM1 9h1v1h-1zM8 9h1v1h-1zM0 10h1v1h-1zM9 10h2v1h-2z"></path><path id="g5bf8_12" d="M6 0h1v1h-1zM6 1h1v1h-1zM6 2h1v1h-1zM0 3h10v1h-10zM6 4h1v1h-1zM2 5h1v1h-1zM6 5h1v1h-1zM3 6h1v1h-1zM6 6h1v1h-1zM6 7h1v1h-1zM6 8h1v1h-1zM6 9h1v1h-1zM4 10h3v1h-3z"></path><path id="g88c1_12" d="M3 0h1v1h-1zM7 0h1v1h-1zM1 1h5v1h-5zM7 1h1v1h-1zM9 1h1v1h-1zM3 2h1v1h-1zM7 2h1v1h-1zM10 2h1v1h-1zM0 3h11v1h-11zM3 4h1v1h-1zM7 4h1v1h-1zM0 5h8v1h-8zM10 5h1v1h-1zM2 6h1v1h-1zM5 6h1v1h-1zM7 6h1v1h-1zM9 6h1v1h-1zM1 7h4v1h-4zM8 7h1v1h-1zM0 8h1v1h-1zM2 8h1v1h-1zM5 8h1v1h-1zM7 8h2v1h-2zM10 8h1v1h-1zM2 9h2v1h-2zM6 9h1v1h-1zM9 9h2v1h-2zM2 10h1v1h-1zM5 10h1v1h-1zM10 10h1v1h-1z"></path><path id="g526a_12" d="M3 0h1v1h-1zM7 0h1v1h-1zM0 1h11v1h-11zM1 2h1v1h-1zM4 2h1v1h-1zM9 2h1v1h-1zM1 3h4v1h-4zM6 3h1v1h-1zM9 3h1v1h-1zM1 4h1v1h-1zM4 4h1v1h-1zM6 4h1v1h-1zM9 4h1v1h-1zM1 5h4v1h-4zM6 5h1v1h-1zM9 5h1v1h-1zM1 6h1v1h-1zM4 6h1v1h-1zM8 6h2v1h-2zM1 8h9v1h-9zM4 9h1v1h-1zM9 9h1v1h-1zM1 10h3v1h-3zM7 10h2v1h-2z"></path><path id="g65cb_12" d="M1 0h1v1h-1zM6 0h1v1h-1zM2 1h1v1h-1zM6 1h5v1h-5zM0 2h6v1h-6zM1 3h1v1h-1zM5 3h6v1h-6zM1 4h4v1h-4zM8 4h1v1h-1zM10 4h1v1h-1zM1 5h1v1h-1zM4 5h1v1h-1zM6 5h1v1h-1zM8 5h1v1h-1zM1 6h1v1h-1zM4 6h1v1h-1zM6 6h1v1h-1zM8 6h3v1h-3zM1 7h1v1h-1zM4 7h1v1h-1zM6 7h1v1h-1zM8 7h1v1h-1zM1 8h1v1h-1zM4 8h1v1h-1zM6 8h1v1h-1zM8 8h1v1h-1zM0 9h1v1h-1zM2 9h1v1h-1zM4 9h2v1h-2zM7 9h2v1h-2zM0 10h1v1h-1zM3 10h1v1h-1zM8 10h3v1h-3z"></path><path id="g8f6c_12" d="M2 0h1v1h-1zM7 0h1v1h-1zM0 1h4v1h-4zM5 1h5v1h-5zM1 2h1v1h-1zM7 2h1v1h-1zM1 3h2v1h-2zM4 3h7v1h-7zM0 4h1v1h-1zM2 4h1v1h-1zM6 4h1v1h-1zM0 5h4v1h-4zM5 5h5v1h-5zM2 6h1v1h-1zM9 6h1v1h-1zM2 7h3v1h-3zM6 7h1v1h-1zM8 7h1v1h-1zM0 8h3v1h-3zM7 8h1v1h-1zM2 9h1v1h-1zM8 9h1v1h-1zM2 10h1v1h-1zM8 10h1v1h-1z"></path><path id="g62a5_12" d="M2 0h1v1h-1zM5 0h5v1h-5zM2 1h1v1h-1zM5 1h1v1h-1zM9 1h1v1h-1zM0 2h6v1h-6zM9 2h1v1h-1zM2 3h1v1h-1zM5 3h1v1h-1zM7 3h2v1h-2zM2 4h1v1h-1zM4 4h2v1h-2zM2 5h2v1h-2zM5 5h6v1h-6zM1 6h2v1h-2zM5 6h1v1h-1zM7 6h1v1h-1zM9 6h1v1h-1zM0 7h1v1h-1zM2 7h1v1h-1zM5 7h1v1h-1zM7 7h1v1h-1zM9 7h1v1h-1zM2 8h1v1h-1zM5 8h1v1h-1zM8 8h1v1h-1zM2 9h1v1h-1zM5 9h1v1h-1zM7 9h1v1h-1zM9 9h1v1h-1zM0 10h3v1h-3zM5 10h2v1h-2zM10 10h1v1h-1z"></path><path id="g540d_12" d="M3 0h1v1h-1zM3 1h7v1h-7zM3 2h1v1h-1zM8 2h1v1h-1zM2 3h1v1h-1zM4 3h1v1h-1zM7 3h1v1h-1zM1 4h1v1h-1zM5 4h2v1h-2zM5 5h1v1h-1zM3 6h7v1h-7zM0 7h4v1h-4zM9 7h1v1h-1zM3 8h1v1h-1zM9 8h1v1h-1zM3 9h1v1h-1zM9 9h1v1h-1zM3 10h7v1h-7z"></path><path id="g7167_12" d="M1 0h10v1h-10zM1 1h1v1h-1zM4 1h1v1h-1zM7 1h1v1h-1zM10 1h1v1h-1zM1 2h1v1h-1zM4 2h1v1h-1zM6 2h1v1h-1zM10 2h1v1h-1zM1 3h5v1h-5zM9 3h1v1h-1zM1 4h1v1h-1zM4 4h1v1h-1zM6 4h5v1h-5zM1 5h1v1h-1zM4 5h1v1h-1zM6 5h1v1h-1zM10 5h1v1h-1zM1 6h4v1h-4zM6 6h1v1h-1zM10 6h1v1h-1zM1 7h1v1h-1zM4 7h1v1h-1zM6 7h5v1h-5zM1 9h1v1h-1zM3 9h1v1h-1zM6 9h1v1h-1zM9 9h1v1h-1zM0 10h1v1h-1zM4 10h1v1h-1zM7 10h1v1h-1zM10 10h1v1h-1z"></path><path id="g8fb9_12" d="M1 0h1v1h-1zM7 0h1v1h-1zM2 1h1v1h-1zM7 1h1v1h-1zM2 2h1v1h-1zM4 2h7v1h-7zM7 3h1v1h-1zM10 3h1v1h-1zM0 4h3v1h-3zM7 4h1v1h-1zM10 4h1v1h-1zM2 5h1v1h-1zM7 5h1v1h-1zM10 5h1v1h-1zM2 6h1v1h-1zM6 6h1v1h-1zM10 6h1v1h-1zM2 7h1v1h-1zM5 7h1v1h-1zM10 7h1v1h-1zM2 8h1v1h-1zM4 8h1v1h-1zM8 8h2v1h-2zM1 9h1v1h-1zM3 9h1v1h-1zM0 10h1v1h-1zM4 10h7v1h-7z"></path><path id="g6846_12" d="M2 0h1v1h-1zM5 0h6v1h-6zM2 1h1v1h-1zM5 1h1v1h-1zM0 2h11v1h-11zM2 3h1v1h-1zM5 3h1v1h-1zM8 3h1v1h-1zM2 4h1v1h-1zM5 4h1v1h-1zM8 4h1v1h-1zM1 5h3v1h-3zM5 5h1v1h-1zM7 5h3v1h-3zM1 6h2v1h-2zM4 6h2v1h-2zM8 6h1v1h-1zM0 7h1v1h-1zM2 7h1v1h-1zM5 7h1v1h-1zM8 7h1v1h-1zM2 8h1v1h-1zM5 8h6v1h-6zM2 9h1v1h-1zM5 9h1v1h-1zM2 10h1v1h-1zM5 10h6v1h-6z"></path><path id="g62fc_12" d="M2 0h1v1h-1zM5 0h1v1h-1zM10 0h1v1h-1zM2 1h1v1h-1zM6 1h1v1h-1zM9 1h1v1h-1zM0 2h11v1h-11zM2 3h1v1h-1zM6 3h1v1h-1zM9 3h1v1h-1zM2 4h1v1h-1zM6 4h1v1h-1zM9 4h1v1h-1zM2 5h9v1h-9zM1 6h2v1h-2zM6 6h1v1h-1zM9 6h1v1h-1zM0 7h1v1h-1zM2 7h1v1h-1zM6 7h1v1h-1zM9 7h1v1h-1zM2 8h1v1h-1zM5 8h1v1h-1zM9 8h1v1h-1zM2 9h1v1h-1zM5 9h1v1h-1zM9 9h1v1h-1zM1 10h2v1h-2zM4 10h1v1h-1zM9 10h1v1h-1z"></path><path id="g6a21_12" d="M2 0h1v1h-1zM6 0h1v1h-1zM8 0h1v1h-1zM2 1h1v1h-1zM4 1h7v1h-7zM0 2h4v1h-4zM6 2h1v1h-1zM8 2h1v1h-1zM2 3h1v1h-1zM5 3h5v1h-5zM2 4h2v1h-2zM5 4h1v1h-1zM9 4h1v1h-1zM1 5h2v1h-2zM4 5h6v1h-6zM1 6h2v1h-2zM5 6h1v1h-1zM9 6h1v1h-1zM0 7h1v1h-1zM2 7h1v1h-1zM4 7h7v1h-7zM2 8h1v1h-1zM7 8h1v1h-1zM2 9h1v1h-1zM6 9h1v1h-1zM8 9h1v1h-1zM2 10h1v1h-1zM4 10h2v1h-2zM9 10h2v1h-2z"></path><path id="g677f_12" d="M2 0h1v1h-1zM8 0h2v1h-2zM2 1h1v1h-1zM5 1h3v1h-3zM0 2h6v1h-6zM2 3h1v1h-1zM5 3h1v1h-1zM2 4h1v1h-1zM5 4h5v1h-5zM1 5h3v1h-3zM5 5h1v1h-1zM9 5h1v1h-1zM1 6h2v1h-2zM4 6h3v1h-3zM9 6h1v1h-1zM0 7h1v1h-1zM2 7h1v1h-1zM5 7h1v1h-1zM7 7h2v1h-2zM2 8h1v1h-1zM4 8h1v1h-1zM8 8h1v1h-1zM2 9h1v1h-1zM4 9h1v1h-1zM7 9h1v1h-1zM9 9h1v1h-1zM2 10h2v1h-2zM5 10h2v1h-2zM10 10h1v1h-1z"></path><path id="g753b_12" d="M0 0h11v1h-11zM2 2h7v1h-7zM0 3h1v1h-1zM2 3h1v1h-1zM5 3h1v1h-1zM8 3h1v1h-1zM10 3h1v1h-1zM0 4h1v1h-1zM2 4h1v1h-1zM5 4h1v1h-1zM8 4h1v1h-1zM10 4h1v1h-1zM0 5h1v1h-1zM2 5h7v1h-7zM10 5h1v1h-1zM0 6h1v1h-1zM2 6h1v1h-1zM5 6h1v1h-1zM8 6h1v1h-1zM10 6h1v1h-1zM0 7h1v1h-1zM2 7h1v1h-1zM5 7h1v1h-1zM8 7h1v1h-1zM10 7h1v1h-1zM0 8h1v1h-1zM2 8h7v1h-7zM10 8h1v1h-1zM0 9h1v1h-1zM10 9h1v1h-1zM0 10h11v1h-11z"></path><path id="g7b14_12" d="M1 0h1v1h-1zM6 0h1v1h-1zM1 1h4v1h-4zM6 1h5v1h-5zM1 2h1v1h-1zM3 2h1v1h-1zM5 2h1v1h-1zM8 2h1v1h-1zM0 3h1v1h-1zM4 3h4v1h-4zM9 3h1v1h-1zM1 4h4v1h-4zM4 5h4v1h-4zM1 6h4v1h-4zM4 7h6v1h-6zM0 8h5v1h-5zM4 9h1v1h-1zM10 9h1v1h-1zM5 10h6v1h-6z"></path><path id="g57fa_12" d="M3 0h1v1h-1zM7 0h1v1h-1zM1 1h9v1h-9zM3 2h1v1h-1zM7 2h1v1h-1zM3 3h3v1h-3zM7 3h1v1h-1zM3 4h1v1h-1zM5 4h3v1h-3zM3 5h1v1h-1zM7 5h1v1h-1zM0 6h11v1h-11zM2 7h1v1h-1zM5 7h1v1h-1zM8 7h1v1h-1zM0 8h2v1h-2zM3 8h5v1h-5zM9 8h2v1h-2zM5 9h1v1h-1zM0 10h11v1h-11z"></path><path id="g672c_12" d="M5 0h1v1h-1zM5 1h1v1h-1zM0 2h11v1h-11zM4 3h3v1h-3zM3 4h1v1h-1zM5 4h1v1h-1zM7 4h1v1h-1zM3 5h1v1h-1zM5 5h1v1h-1zM7 5h1v1h-1zM2 6h1v1h-1zM5 6h1v1h-1zM8 6h1v1h-1zM1 7h1v1h-1zM5 7h1v1h-1zM9 7h1v1h-1zM0 8h1v1h-1zM3 8h5v1h-5zM10 8h1v1h-1zM5 9h1v1h-1zM5 10h1v1h-1z"></path><path id="g8c03_12" d="M1 0h1v1h-1zM4 0h7v1h-7zM2 1h1v1h-1zM4 1h1v1h-1zM7 1h1v1h-1zM10 1h1v1h-1zM4 2h1v1h-1zM6 2h3v1h-3zM10 2h1v1h-1zM0 3h3v1h-3zM4 3h1v1h-1zM7 3h1v1h-1zM10 3h1v1h-1zM2 4h1v1h-1zM4 4h7v1h-7zM2 5h1v1h-1zM4 5h1v1h-1zM10 5h1v1h-1zM2 6h1v1h-1zM4 6h1v1h-1zM6 6h3v1h-3zM10 6h1v1h-1zM2 7h1v1h-1zM4 7h1v1h-1zM6 7h1v1h-1zM8 7h1v1h-1zM10 7h1v1h-1zM2 8h3v1h-3zM6 8h3v1h-3zM10 8h1v1h-1zM2 9h1v1h-1zM4 9h1v1h-1zM10 9h1v1h-1zM3 10h1v1h-1zM8 10h3v1h-3z"></path><path id="g6574_12" d="M3 0h1v1h-1zM7 0h1v1h-1zM0 1h11v1h-11zM1 2h1v1h-1zM3 2h1v1h-1zM5 2h1v1h-1zM7 2h1v1h-1zM9 2h1v1h-1zM1 3h5v1h-5zM8 3h1v1h-1zM2 4h3v1h-3zM7 4h1v1h-1zM9 4h1v1h-1zM1 5h1v1h-1zM3 5h1v1h-1zM5 5h2v1h-2zM10 5h1v1h-1zM1 6h9v1h-9zM5 7h1v1h-1zM2 8h1v1h-1zM5 8h4v1h-4zM2 9h1v1h-1zM5 9h1v1h-1zM0 10h11v1h-11z"></path><path id="g6570_12" d="M0 0h1v1h-1zM3 0h1v1h-1zM5 0h1v1h-1zM7 0h1v1h-1zM1 1h1v1h-1zM3 1h2v1h-2zM7 1h1v1h-1zM0 2h6v1h-6zM7 2h4v1h-4zM2 3h2v1h-2zM6 3h2v1h-2zM9 3h1v1h-1zM1 4h1v1h-1zM3 4h2v1h-2zM7 4h1v1h-1zM9 4h1v1h-1zM0 5h1v1h-1zM3 5h1v1h-1zM5 5h1v1h-1zM7 5h1v1h-1zM9 5h1v1h-1zM0 6h6v1h-6zM7 6h1v1h-1zM9 6h1v1h-1zM2 7h1v1h-1zM4 7h1v1h-1zM7 7h1v1h-1zM9 7h1v1h-1zM1 8h2v1h-2zM4 8h1v1h-1zM8 8h1v1h-1zM3 9h1v1h-1zM7 9h1v1h-1zM9 9h1v1h-1zM0 10h3v1h-3zM4 10h3v1h-3zM10 10h1v1h-1z"></path><path id="g7801_12" d="M5 0h5v1h-5zM0 1h5v1h-5zM9 1h1v1h-1zM2 2h1v1h-1zM6 2h1v1h-1zM9 2h1v1h-1zM2 3h1v1h-1zM6 3h1v1h-1zM9 3h1v1h-1zM1 4h4v1h-4zM6 4h1v1h-1zM9 4h1v1h-1zM0 5h2v1h-2zM4 5h7v1h-7zM1 6h1v1h-1zM4 6h1v1h-1zM10 6h1v1h-1zM1 7h1v1h-1zM4 7h5v1h-5zM10 7h1v1h-1zM1 8h4v1h-4zM10 8h1v1h-1zM1 9h1v1h-1zM4 9h1v1h-1zM7 9h1v1h-1zM10 9h1v1h-1zM8 10h2v1h-2z"></path><path id="g6697_12" d="M7 0h1v1h-1zM0 1h11v1h-11zM0 2h1v1h-1zM3 2h1v1h-1zM5 2h1v1h-1zM9 2h1v1h-1zM0 3h1v1h-1zM3 3h1v1h-1zM6 3h1v1h-1zM8 3h1v1h-1zM0 4h11v1h-11zM0 5h1v1h-1zM3 5h1v1h-1zM0 6h1v1h-1zM3 6h1v1h-1zM5 6h5v1h-5zM0 7h4v1h-4zM5 7h1v1h-1zM9 7h1v1h-1zM0 8h1v1h-1zM3 8h1v1h-1zM5 8h5v1h-5zM5 9h1v1h-1zM9 9h1v1h-1zM5 10h5v1h-5z"></path><path id="g623f_12" d="M5 0h1v1h-1zM2 1h8v1h-8zM2 2h1v1h-1zM9 2h1v1h-1zM2 3h8v1h-8zM2 4h1v1h-1zM6 4h1v1h-1zM2 5h9v1h-9zM2 6h1v1h-1zM5 6h1v1h-1zM2 7h1v1h-1zM5 7h5v1h-5zM1 8h1v1h-1zM5 8h1v1h-1zM9 8h1v1h-1zM1 9h1v1h-1zM4 9h1v1h-1zM9 9h1v1h-1zM0 10h1v1h-1zM3 10h1v1h-1zM7 10h2v1h-2z"></path><path id="g6587_12" d="M4 0h1v1h-1zM5 1h1v1h-1zM0 2h11v1h-11zM3 3h1v1h-1zM7 3h1v1h-1zM3 4h1v1h-1zM7 4h1v1h-1zM3 5h1v1h-1zM7 5h1v1h-1zM4 6h1v1h-1zM6 6h1v1h-1zM4 7h1v1h-1zM6 7h1v1h-1zM5 8h1v1h-1zM3 9h2v1h-2zM6 9h2v1h-2zM0 10h3v1h-3zM8 10h3v1h-3z"></path><path id="g5b57_12" d="M5 0h1v1h-1zM1 1h10v1h-10zM1 2h1v1h-1zM10 2h1v1h-1zM0 3h1v1h-1zM3 3h5v1h-5zM9 3h1v1h-1zM6 4h1v1h-1zM5 5h1v1h-1zM0 6h11v1h-11zM5 7h1v1h-1zM5 8h1v1h-1zM5 9h1v1h-1zM3 10h3v1h-3z"></path><path id="g6c34_12" d="M5 0h1v1h-1zM5 1h1v1h-1zM5 2h1v1h-1zM9 2h1v1h-1zM0 3h4v1h-4zM5 3h2v1h-2zM8 3h1v1h-1zM3 4h1v1h-1zM5 4h1v1h-1zM7 4h1v1h-1zM3 5h1v1h-1zM5 5h1v1h-1zM7 5h1v1h-1zM2 6h1v1h-1zM5 6h1v1h-1zM8 6h1v1h-1zM2 7h1v1h-1zM5 7h1v1h-1zM8 7h1v1h-1zM1 8h1v1h-1zM5 8h1v1h-1zM9 8h1v1h-1zM0 9h1v1h-1zM3 9h1v1h-1zM5 9h1v1h-1zM10 9h1v1h-1zM4 10h1v1h-1z"></path><path id="g5370_12" d="M3 0h1v1h-1zM0 1h3v1h-3zM5 1h5v1h-5zM0 2h1v1h-1zM5 2h1v1h-1zM9 2h1v1h-1zM0 3h1v1h-1zM5 3h1v1h-1zM9 3h1v1h-1zM0 4h4v1h-4zM5 4h1v1h-1zM9 4h1v1h-1zM0 5h1v1h-1zM5 5h1v1h-1zM9 5h1v1h-1zM0 6h1v1h-1zM5 6h1v1h-1zM9 6h1v1h-1zM0 7h1v1h-1zM3 7h1v1h-1zM5 7h1v1h-1zM9 7h1v1h-1zM0 8h3v1h-3zM5 8h1v1h-1zM7 8h2v1h-2zM0 9h1v1h-1zM5 9h1v1h-1zM5 10h1v1h-1z"></path><path id="g6253_15b" d="M3 0h2v1h-2zM3 1h2v1h-2zM3 2h2v1h-2zM6 2h9v1h-9zM0 3h7v1h-7zM10 3h2v1h-2zM3 4h2v1h-2zM10 4h2v1h-2zM3 5h2v1h-2zM10 5h2v1h-2zM3 6h4v1h-4zM10 6h2v1h-2zM3 7h3v1h-3zM10 7h2v1h-2zM2 8h3v1h-3zM10 8h2v1h-2zM0 9h5v1h-5zM10 9h2v1h-2zM3 10h2v1h-2zM10 10h2v1h-2zM3 11h2v1h-2zM10 11h2v1h-2zM1 12h4v1h-4zM8 12h4v1h-4zM2 13h2v1h-2zM9 13h2v1h-2z"></path><path id="g5f00_15b" d="M1 0h13v1h-13zM4 1h2v1h-2zM9 1h2v1h-2zM4 2h2v1h-2zM9 2h2v1h-2zM4 3h2v1h-2zM9 3h2v1h-2zM4 4h2v1h-2zM9 4h2v1h-2zM0 5h15v1h-15zM4 6h2v1h-2zM9 6h2v1h-2zM4 7h2v1h-2zM9 7h2v1h-2zM3 8h2v1h-2zM9 8h2v1h-2zM3 9h2v1h-2zM9 9h2v1h-2zM2 10h2v1h-2zM9 10h2v1h-2zM1 11h2v1h-2zM9 11h2v1h-2zM0 12h2v1h-2zM9 12h2v1h-2z"></path><path id="g56fe_15b" d="M0 0h13v1h-13zM0 1h2v1h-2zM4 1h2v1h-2zM11 1h2v1h-2zM0 2h2v1h-2zM4 2h6v1h-6zM11 2h2v1h-2zM0 3h2v1h-2zM3 3h2v1h-2zM8 3h2v1h-2zM11 3h2v1h-2zM0 4h6v1h-6zM7 4h2v1h-2zM11 4h2v1h-2zM0 5h2v1h-2zM5 5h3v1h-3zM11 5h2v1h-2zM0 6h2v1h-2zM3 6h3v1h-3zM7 6h3v1h-3zM11 6h2v1h-2zM0 7h4v1h-4zM5 7h3v1h-3zM9 7h4v1h-4zM0 8h2v1h-2zM7 8h2v1h-2zM11 8h2v1h-2zM0 9h2v1h-2zM4 9h3v1h-3zM11 9h2v1h-2zM0 10h2v1h-2zM6 10h2v1h-2zM11 10h2v1h-2zM0 11h2v1h-2zM11 11h2v1h-2zM0 12h13v1h-13z"></path><path id="g7247_15b" d="M7 0h2v1h-2zM2 1h2v1h-2zM7 1h2v1h-2zM2 2h2v1h-2zM7 2h2v1h-2zM2 3h2v1h-2zM7 3h2v1h-2zM2 4h12v1h-12zM2 5h2v1h-2zM2 6h2v1h-2zM2 7h2v1h-2zM2 8h9v1h-9zM2 9h2v1h-2zM9 9h2v1h-2zM2 10h2v1h-2zM9 10h2v1h-2zM1 11h2v1h-2zM9 11h2v1h-2zM1 12h2v1h-2zM9 12h2v1h-2zM0 13h2v1h-2zM9 13h2v1h-2z"></path><path id="g652f_12" d="M5 0h1v1h-1zM5 1h1v1h-1zM0 2h11v1h-11zM5 3h1v1h-1zM2 4h7v1h-7zM3 5h1v1h-1zM7 5h1v1h-1zM3 6h1v1h-1zM7 6h1v1h-1zM4 7h1v1h-1zM6 7h1v1h-1zM5 8h1v1h-1zM3 9h2v1h-2zM6 9h2v1h-2zM0 10h3v1h-3zM8 10h3v1h-3z"></path><path id="g6301_12" d="M2 0h1v1h-1zM7 0h1v1h-1zM2 1h1v1h-1zM5 1h5v1h-5zM0 2h5v1h-5zM7 2h1v1h-1zM2 3h1v1h-1zM7 3h1v1h-1zM2 4h1v1h-1zM4 4h7v1h-7zM2 5h2v1h-2zM8 5h1v1h-1zM1 6h2v1h-2zM4 6h7v1h-7zM0 7h1v1h-1zM2 7h1v1h-1zM5 7h1v1h-1zM8 7h1v1h-1zM2 8h1v1h-1zM6 8h1v1h-1zM8 8h1v1h-1zM2 9h1v1h-1zM8 9h1v1h-1zM0 10h3v1h-3zM7 10h2v1h-2z"></path><path id="g62d6_12" d="M2 0h1v1h-1zM5 0h1v1h-1zM2 1h1v1h-1zM5 1h6v1h-6zM0 2h5v1h-5zM2 3h1v1h-1zM7 3h1v1h-1zM2 4h1v1h-1zM5 4h1v1h-1zM7 4h3v1h-3zM2 5h2v1h-2zM5 5h3v1h-3zM9 5h1v1h-1zM1 6h2v1h-2zM4 6h2v1h-2zM7 6h1v1h-1zM9 6h1v1h-1zM0 7h1v1h-1zM2 7h1v1h-1zM5 7h1v1h-1zM7 7h3v1h-3zM2 8h1v1h-1zM5 8h1v1h-1zM7 8h1v1h-1zM10 8h1v1h-1zM2 9h1v1h-1zM5 9h1v1h-1zM10 9h1v1h-1zM0 10h3v1h-3zM6 10h5v1h-5z"></path><path id="g62fd_12" d="M2 0h1v1h-1zM7 0h1v1h-1zM2 1h1v1h-1zM5 1h6v1h-6zM0 2h6v1h-6zM7 2h1v1h-1zM10 2h1v1h-1zM2 3h1v1h-1zM5 3h6v1h-6zM2 4h1v1h-1zM4 4h2v1h-2zM7 4h1v1h-1zM10 4h1v1h-1zM2 5h2v1h-2zM5 5h6v1h-6zM1 6h2v1h-2zM7 6h1v1h-1zM9 6h1v1h-1zM0 7h1v1h-1zM2 7h1v1h-1zM7 7h2v1h-2zM2 8h1v1h-1zM7 8h1v1h-1zM10 8h1v1h-1zM2 9h1v1h-1zM6 9h1v1h-1zM8 9h1v1h-1zM10 9h1v1h-1zM0 10h3v1h-3zM4 10h2v1h-2zM9 10h2v1h-2z"></path><path id="g5230_12" d="M0 0h7v1h-7zM10 0h1v1h-1zM3 1h1v1h-1zM10 1h1v1h-1zM2 2h1v1h-1zM8 2h1v1h-1zM10 2h1v1h-1zM1 3h1v1h-1zM5 3h1v1h-1zM8 3h1v1h-1zM10 3h1v1h-1zM0 4h7v1h-7zM8 4h1v1h-1zM10 4h1v1h-1zM3 5h1v1h-1zM8 5h1v1h-1zM10 5h1v1h-1zM1 6h5v1h-5zM8 6h1v1h-1zM10 6h1v1h-1zM3 7h1v1h-1zM8 7h1v1h-1zM10 7h1v1h-1zM3 8h1v1h-1zM10 8h1v1h-1zM3 9h4v1h-4zM10 9h1v1h-1zM0 10h3v1h-3zM8 10h3v1h-3z"></path><path id="g6b64_12" d="M3 0h1v1h-1zM7 0h1v1h-1zM3 1h1v1h-1zM7 1h1v1h-1zM3 2h1v1h-1zM7 2h1v1h-1zM10 2h1v1h-1zM1 3h1v1h-1zM3 3h1v1h-1zM7 3h1v1h-1zM9 3h1v1h-1zM1 4h1v1h-1zM3 4h3v1h-3zM7 4h2v1h-2zM1 5h1v1h-1zM3 5h1v1h-1zM7 5h1v1h-1zM1 6h1v1h-1zM3 6h1v1h-1zM7 6h1v1h-1zM1 7h1v1h-1zM3 7h1v1h-1zM7 7h1v1h-1zM1 8h1v1h-1zM3 8h1v1h-1zM7 8h1v1h-1zM10 8h1v1h-1zM1 9h1v1h-1zM3 9h3v1h-3zM7 9h1v1h-1zM10 9h1v1h-1zM0 10h3v1h-3zM8 10h3v1h-3z"></path><path id="g5904_12" d="M2 0h1v1h-1zM7 0h1v1h-1zM2 1h1v1h-1zM7 1h1v1h-1zM2 2h4v1h-4zM7 2h1v1h-1zM2 3h1v1h-1zM5 3h1v1h-1zM7 3h2v1h-2zM1 4h1v1h-1zM5 4h1v1h-1zM7 4h1v1h-1zM9 4h1v1h-1zM0 5h1v1h-1zM2 5h1v1h-1zM4 5h1v1h-1zM7 5h1v1h-1zM10 5h1v1h-1zM2 6h1v1h-1zM4 6h1v1h-1zM7 6h1v1h-1zM3 7h1v1h-1zM7 7h1v1h-1zM2 8h1v1h-1zM4 8h1v1h-1zM7 8h1v1h-1zM1 9h1v1h-1zM5 9h2v1h-2zM0 10h1v1h-1zM7 10h4v1h-4z"></path><path id="g8bd5_12" d="M1 0h1v1h-1zM7 0h1v1h-1zM9 0h1v1h-1zM2 1h1v1h-1zM7 1h1v1h-1zM10 1h1v1h-1zM3 2h8v1h-8zM7 3h1v1h-1zM0 4h3v1h-3zM4 4h4v1h-4zM2 5h1v1h-1zM5 5h1v1h-1zM7 5h1v1h-1zM2 6h1v1h-1zM5 6h1v1h-1zM7 6h1v1h-1zM2 7h1v1h-1zM5 7h1v1h-1zM8 7h1v1h-1zM10 7h1v1h-1zM2 8h1v1h-1zM5 8h2v1h-2zM8 8h1v1h-1zM10 8h1v1h-1zM2 9h3v1h-3zM9 9h2v1h-2zM2 10h1v1h-1zM10 10h1v1h-1z"></path><path id="g6837_12" d="M2 0h1v1h-1zM5 0h1v1h-1zM9 0h1v1h-1zM2 1h1v1h-1zM6 1h1v1h-1zM8 1h1v1h-1zM0 2h11v1h-11zM2 3h1v1h-1zM7 3h1v1h-1zM1 4h3v1h-3zM5 4h5v1h-5zM1 5h2v1h-2zM7 5h1v1h-1zM0 6h1v1h-1zM2 6h1v1h-1zM7 6h1v1h-1zM2 7h1v1h-1zM4 7h7v1h-7zM2 8h1v1h-1zM7 8h1v1h-1zM2 9h1v1h-1zM7 9h1v1h-1zM2 10h1v1h-1zM7 10h1v1h-1z"></path><path id="g5206_12" d="M3 0h1v1h-1zM7 0h1v1h-1zM3 1h1v1h-1zM7 1h1v1h-1zM2 2h1v1h-1zM8 2h1v1h-1zM2 3h1v1h-1zM8 3h1v1h-1zM1 4h1v1h-1zM9 4h1v1h-1zM0 5h1v1h-1zM2 5h7v1h-7zM10 5h1v1h-1zM4 6h1v1h-1zM8 6h1v1h-1zM4 7h1v1h-1zM8 7h1v1h-1zM3 8h1v1h-1zM8 8h1v1h-1zM2 9h1v1h-1zM8 9h1v1h-1zM0 10h2v1h-2zM6 10h2v1h-2z"></path><path id="g4eab_12" d="M6 0h1v1h-1zM0 1h11v1h-11zM2 2h1v1h-1zM8 2h1v1h-1zM2 3h7v1h-7zM2 5h7v1h-7zM7 6h1v1h-1zM1 7h10v1h-10zM6 8h1v1h-1zM6 9h1v1h-1zM4 10h3v1h-3z"></path><path id="g52a8_12" d="M7 0h1v1h-1zM1 1h4v1h-4zM7 1h1v1h-1zM7 2h1v1h-1zM6 3h5v1h-5zM0 4h6v1h-6zM7 4h1v1h-1zM10 4h1v1h-1zM2 5h1v1h-1zM7 5h1v1h-1zM10 5h1v1h-1zM2 6h1v1h-1zM7 6h1v1h-1zM10 6h1v1h-1zM1 7h1v1h-1zM4 7h1v1h-1zM7 7h1v1h-1zM10 7h1v1h-1zM0 8h5v1h-5zM6 8h1v1h-1zM10 8h1v1h-1zM4 9h1v1h-1zM6 9h1v1h-1zM10 9h1v1h-1zM5 10h1v1h-1zM8 10h2v1h-2z"></path><path id="g4f5c_12" d="M3 0h1v1h-1zM5 0h1v1h-1zM3 1h1v1h-1zM5 1h1v1h-1zM2 2h1v1h-1zM5 2h6v1h-6zM2 3h1v1h-1zM4 3h1v1h-1zM6 3h1v1h-1zM1 4h3v1h-3zM6 4h1v1h-1zM0 5h1v1h-1zM2 5h1v1h-1zM6 5h4v1h-4zM2 6h1v1h-1zM6 6h1v1h-1zM2 7h1v1h-1zM6 7h1v1h-1zM2 8h1v1h-1zM6 8h5v1h-5zM2 9h1v1h-1zM6 9h1v1h-1zM2 10h1v1h-1zM6 10h1v1h-1z"></path><path id="g64a4_12" d="M1 0h1v1h-1zM5 0h1v1h-1zM8 0h1v1h-1zM1 1h1v1h-1zM3 1h6v1h-6zM0 2h3v1h-3zM4 2h1v1h-1zM6 2h1v1h-1zM8 2h3v1h-3zM1 3h1v1h-1zM3 3h3v1h-3zM7 3h2v1h-2zM10 3h1v1h-1zM1 4h1v1h-1zM3 4h1v1h-1zM6 4h1v1h-1zM8 4h1v1h-1zM10 4h1v1h-1zM1 5h1v1h-1zM3 5h4v1h-4zM8 5h1v1h-1zM10 5h1v1h-1zM0 6h2v1h-2zM3 6h1v1h-1zM6 6h1v1h-1zM8 6h1v1h-1zM10 6h1v1h-1zM1 7h1v1h-1zM3 7h4v1h-4zM8 7h1v1h-1zM10 7h1v1h-1zM1 8h1v1h-1zM3 8h1v1h-1zM6 8h1v1h-1zM9 8h1v1h-1zM1 9h1v1h-1zM3 9h1v1h-1zM6 9h1v1h-1zM8 9h1v1h-1zM10 9h1v1h-1zM0 10h2v1h-2zM3 10h1v1h-1zM5 10h3v1h-3zM10 10h1v1h-1z"></path><path id="g9500_12" d="M1 0h1v1h-1zM7 0h1v1h-1zM1 1h1v1h-1zM5 1h1v1h-1zM7 1h1v1h-1zM10 1h1v1h-1zM1 2h4v1h-4zM6 2h2v1h-2zM9 2h1v1h-1zM0 3h1v1h-1zM5 3h6v1h-6zM0 4h6v1h-6zM10 4h1v1h-1zM2 5h1v1h-1zM5 5h6v1h-6zM0 6h6v1h-6zM10 6h1v1h-1zM2 7h1v1h-1zM5 7h6v1h-6zM2 8h1v1h-1zM4 8h2v1h-2zM10 8h1v1h-1zM2 9h2v1h-2zM5 9h1v1h-1zM10 9h1v1h-1zM2 10h1v1h-1zM5 10h1v1h-1zM8 10h3v1h-3z"></path><path id="g91cd_12" d="M1 0h9v1h-9zM5 1h1v1h-1zM0 2h11v1h-11zM2 3h1v1h-1zM5 3h1v1h-1zM8 3h1v1h-1zM2 4h7v1h-7zM2 5h1v1h-1zM5 5h1v1h-1zM8 5h1v1h-1zM2 6h7v1h-7zM5 7h1v1h-1zM1 8h9v1h-9zM5 9h1v1h-1zM0 10h11v1h-11z"></path><path id="g505a_12" d="M2 0h1v1h-1zM4 0h1v1h-1zM8 0h1v1h-1zM2 1h1v1h-1zM4 1h1v1h-1zM8 1h1v1h-1zM1 2h1v1h-1zM4 2h1v1h-1zM8 2h1v1h-1zM1 3h10v1h-10zM0 4h2v1h-2zM4 4h1v1h-1zM7 4h1v1h-1zM9 4h1v1h-1zM1 5h1v1h-1zM4 5h1v1h-1zM6 5h2v1h-2zM9 5h1v1h-1zM1 6h1v1h-1zM3 6h3v1h-3zM7 6h1v1h-1zM9 6h1v1h-1zM1 7h1v1h-1zM3 7h1v1h-1zM5 7h1v1h-1zM7 7h1v1h-1zM9 7h1v1h-1zM1 8h1v1h-1zM3 8h1v1h-1zM5 8h1v1h-1zM8 8h1v1h-1zM1 9h1v1h-1zM3 9h3v1h-3zM7 9h1v1h-1zM9 9h1v1h-1zM1 10h1v1h-1zM6 10h1v1h-1zM10 10h1v1h-1z"></path><path id="g8fd8_12" d="M1 0h1v1h-1zM4 0h7v1h-7zM2 1h1v1h-1zM8 1h1v1h-1zM2 2h1v1h-1zM7 2h1v1h-1zM7 3h1v1h-1zM0 4h3v1h-3zM6 4h2v1h-2zM9 4h1v1h-1zM2 5h1v1h-1zM5 5h1v1h-1zM7 5h1v1h-1zM10 5h1v1h-1zM2 6h1v1h-1zM4 6h1v1h-1zM7 6h1v1h-1zM10 6h1v1h-1zM2 7h1v1h-1zM7 7h1v1h-1zM2 8h1v1h-1zM7 8h1v1h-1zM1 9h1v1h-1zM3 9h1v1h-1zM0 10h1v1h-1zM4 10h7v1h-7z"></path><path id="g539f_12" d="M2 0h9v1h-9zM2 1h1v1h-1zM6 1h1v1h-1zM2 2h1v1h-1zM4 2h6v1h-6zM2 3h1v1h-1zM4 3h1v1h-1zM9 3h1v1h-1zM2 4h1v1h-1zM4 4h6v1h-6zM2 5h1v1h-1zM4 5h1v1h-1zM9 5h1v1h-1zM2 6h1v1h-1zM4 6h6v1h-6zM2 7h1v1h-1zM6 7h1v1h-1zM2 8h1v1h-1zM4 8h1v1h-1zM6 8h1v1h-1zM8 8h1v1h-1zM1 9h1v1h-1zM3 9h1v1h-1zM6 9h1v1h-1zM9 9h2v1h-2zM0 10h1v1h-1zM2 10h1v1h-1zM5 10h2v1h-2zM10 10h1v1h-1z"></path><path id="g76f4_14" d="M6 0h1v1h-1zM0 1h13v1h-13zM6 2h1v1h-1zM2 3h9v1h-9zM2 4h1v1h-1zM10 4h1v1h-1zM2 5h9v1h-9zM2 6h1v1h-1zM10 6h1v1h-1zM2 7h9v1h-9zM2 8h1v1h-1zM10 8h1v1h-1zM2 9h9v1h-9zM2 10h1v1h-1zM10 10h1v1h-1zM2 11h1v1h-1zM10 11h1v1h-1zM0 12h13v1h-13z"></path><path id="g65b9_14" d="M5 0h1v1h-1zM6 1h1v1h-1zM0 2h13v1h-13zM5 3h1v1h-1zM5 4h1v1h-1zM5 5h6v1h-6zM5 6h1v1h-1zM10 6h1v1h-1zM4 7h1v1h-1zM10 7h1v1h-1zM4 8h1v1h-1zM10 8h1v1h-1zM3 9h1v1h-1zM10 9h1v1h-1zM3 10h1v1h-1zM10 10h1v1h-1zM2 11h1v1h-1zM7 11h1v1h-1zM9 11h1v1h-1zM1 12h1v1h-1zM8 12h1v1h-1z"></path><path id="g56fe_14" d="M0 0h11v1h-11zM0 1h1v1h-1zM4 1h1v1h-1zM10 1h1v1h-1zM0 2h1v1h-1zM4 2h4v1h-4zM10 2h1v1h-1zM0 3h1v1h-1zM3 3h1v1h-1zM7 3h1v1h-1zM10 3h1v1h-1zM0 4h1v1h-1zM2 4h1v1h-1zM4 4h1v1h-1zM6 4h1v1h-1zM10 4h1v1h-1zM0 5h1v1h-1zM5 5h1v1h-1zM10 5h1v1h-1zM0 6h1v1h-1zM3 6h2v1h-2zM6 6h2v1h-2zM10 6h1v1h-1zM0 7h3v1h-3zM5 7h1v1h-1zM8 7h3v1h-3zM0 8h1v1h-1zM6 8h1v1h-1zM10 8h1v1h-1zM0 9h1v1h-1zM4 9h1v1h-1zM10 9h1v1h-1zM0 10h1v1h-1zM5 10h1v1h-1zM10 10h1v1h-1zM0 11h11v1h-11zM0 12h1v1h-1zM10 12h1v1h-1z"></path><path id="g4e00_14" d="M0 0h13v1h-13z"></path><path id="g952e_14" d="M1 0h1v1h-1zM9 0h1v1h-1zM1 1h1v1h-1zM4 1h2v1h-2zM7 1h5v1h-5zM1 2h3v1h-3zM5 2h1v1h-1zM9 2h1v1h-1zM11 2h1v1h-1zM0 3h1v1h-1zM5 3h8v1h-8zM0 4h4v1h-4zM5 4h1v1h-1zM9 4h1v1h-1zM11 4h1v1h-1zM2 5h1v1h-1zM4 5h1v1h-1zM7 5h5v1h-5zM2 6h1v1h-1zM5 6h1v1h-1zM9 6h1v1h-1zM0 7h6v1h-6zM7 7h5v1h-5zM2 8h1v1h-1zM5 8h1v1h-1zM9 8h1v1h-1zM2 9h1v1h-1zM5 9h8v1h-8zM2 10h1v1h-1zM4 10h2v1h-2zM9 10h1v1h-1zM2 11h2v1h-2zM5 11h2v1h-2zM9 11h1v1h-1zM2 12h1v1h-1zM4 12h1v1h-1zM7 12h6v1h-6z"></path><path id="g8bbe_14" d="M1 0h1v1h-1zM6 0h5v1h-5zM2 1h1v1h-1zM6 1h1v1h-1zM10 1h1v1h-1zM2 2h1v1h-1zM6 2h1v1h-1zM10 2h1v1h-1zM6 3h1v1h-1zM10 3h1v1h-1zM0 4h3v1h-3zM5 4h1v1h-1zM11 4h2v1h-2zM2 5h1v1h-1zM4 5h1v1h-1zM2 6h1v1h-1zM5 6h7v1h-7zM2 7h1v1h-1zM6 7h1v1h-1zM10 7h1v1h-1zM2 8h1v1h-1zM7 8h1v1h-1zM9 8h1v1h-1zM2 9h1v1h-1zM4 9h1v1h-1zM8 9h1v1h-1zM2 10h2v1h-2zM7 10h1v1h-1zM9 10h1v1h-1zM2 11h1v1h-1zM6 11h1v1h-1zM10 11h1v1h-1zM4 12h2v1h-2zM11 12h2v1h-2z"></path><path id="g7f6e_14" d="M1 0h11v1h-11zM1 1h1v1h-1zM4 1h1v1h-1zM8 1h1v1h-1zM11 1h1v1h-1zM1 2h11v1h-11zM6 3h1v1h-1zM0 4h13v1h-13zM3 5h1v1h-1zM9 5h1v1h-1zM3 6h7v1h-7zM3 7h1v1h-1zM9 7h1v1h-1zM3 8h7v1h-7zM3 9h1v1h-1zM9 9h1v1h-1zM3 10h7v1h-7zM3 11h1v1h-1zM9 11h1v1h-1zM0 12h13v1h-13z"></path><path id="g81ea_12" d="M2 0h1v1h-1zM0 1h7v1h-7zM0 2h1v1h-1zM6 2h1v1h-1zM0 3h1v1h-1zM6 3h1v1h-1zM0 4h7v1h-7zM0 5h1v1h-1zM6 5h1v1h-1zM0 6h7v1h-7zM0 7h1v1h-1zM6 7h1v1h-1zM0 8h1v1h-1zM6 8h1v1h-1zM0 9h7v1h-7zM0 10h1v1h-1zM6 10h1v1h-1z"></path><path id="g7f8e_12" d="M3 0h1v1h-1zM7 0h1v1h-1zM1 1h9v1h-9zM5 2h1v1h-1zM2 3h7v1h-7zM5 4h1v1h-1zM0 5h11v1h-11zM5 6h1v1h-1zM1 7h9v1h-9zM4 8h1v1h-1zM6 8h1v1h-1zM3 9h1v1h-1zM7 9h1v1h-1zM0 10h3v1h-3zM8 10h3v1h-3z"></path><path id="g5316_12" d="M3 0h1v1h-1zM6 0h1v1h-1zM3 1h1v1h-1zM6 1h1v1h-1zM2 2h1v1h-1zM6 2h1v1h-1zM9 2h1v1h-1zM2 3h1v1h-1zM6 3h1v1h-1zM8 3h1v1h-1zM1 4h2v1h-2zM6 4h2v1h-2zM0 5h1v1h-1zM2 5h1v1h-1zM6 5h1v1h-1zM2 6h1v1h-1zM5 6h2v1h-2zM2 7h1v1h-1zM4 7h1v1h-1zM6 7h1v1h-1zM2 8h1v1h-1zM6 8h1v1h-1zM10 8h1v1h-1zM2 9h1v1h-1zM6 9h1v1h-1zM10 9h1v1h-1zM2 10h1v1h-1zM7 10h4v1h-4z"></path><path id="g66dd_12" d="M4 0h6v1h-6zM0 1h3v1h-3zM4 1h1v1h-1zM9 1h1v1h-1zM0 2h1v1h-1zM2 2h1v1h-1zM4 2h6v1h-6zM0 3h1v1h-1zM2 3h1v1h-1zM4 3h1v1h-1zM9 3h1v1h-1zM0 4h11v1h-11zM0 5h1v1h-1zM2 5h1v1h-1zM6 5h1v1h-1zM8 5h1v1h-1zM0 6h1v1h-1zM2 6h9v1h-9zM0 7h3v1h-3zM5 7h1v1h-1zM7 7h1v1h-1zM9 7h1v1h-1zM0 8h1v1h-1zM2 8h1v1h-1zM4 8h1v1h-1zM6 8h3v1h-3zM10 8h1v1h-1zM5 9h1v1h-1zM7 9h1v1h-1zM9 9h1v1h-1zM4 10h1v1h-1zM6 10h2v1h-2zM10 10h1v1h-1z"></path><path id="g5149_12" d="M5 0h1v1h-1zM1 1h1v1h-1zM5 1h1v1h-1zM9 1h1v1h-1zM2 2h1v1h-1zM5 2h1v1h-1zM8 2h1v1h-1zM5 3h1v1h-1zM0 4h11v1h-11zM3 5h1v1h-1zM6 5h1v1h-1zM3 6h1v1h-1zM6 6h1v1h-1zM3 7h1v1h-1zM6 7h1v1h-1zM10 7h1v1h-1zM3 8h1v1h-1zM6 8h1v1h-1zM10 8h1v1h-1zM2 9h1v1h-1zM6 9h1v1h-1zM10 9h1v1h-1zM0 10h2v1h-2zM7 10h4v1h-4z"></path><path id="g767d_12" d="M3 0h1v1h-1zM2 1h1v1h-1zM0 2h8v1h-8zM0 3h1v1h-1zM7 3h1v1h-1zM0 4h1v1h-1zM7 4h1v1h-1zM0 5h8v1h-8zM0 6h1v1h-1zM7 6h1v1h-1zM0 7h1v1h-1zM7 7h1v1h-1zM0 8h1v1h-1zM7 8h1v1h-1zM0 9h8v1h-8zM0 10h1v1h-1zM7 10h1v1h-1z"></path><path id="g5e73_12" d="M1 0h9v1h-9zM5 1h1v1h-1zM2 2h1v1h-1zM5 2h1v1h-1zM8 2h1v1h-1zM3 3h1v1h-1zM5 3h1v1h-1zM7 3h1v1h-1zM5 4h1v1h-1zM0 5h11v1h-11zM5 6h1v1h-1zM5 7h1v1h-1zM5 8h1v1h-1zM5 9h1v1h-1zM5 10h1v1h-1z"></path><path id="g8861_12" d="M2 0h1v1h-1zM4 0h3v1h-3zM8 0h3v1h-3zM1 1h1v1h-1zM3 1h1v1h-1zM5 1h1v1h-1zM0 2h1v1h-1zM3 2h5v1h-5zM2 3h2v1h-2zM5 3h1v1h-1zM7 3h4v1h-4zM1 4h1v1h-1zM3 4h5v1h-5zM9 4h1v1h-1zM0 5h2v1h-2zM3 5h1v1h-1zM5 5h1v1h-1zM7 5h1v1h-1zM9 5h1v1h-1zM1 6h1v1h-1zM3 6h5v1h-5zM9 6h1v1h-1zM1 7h1v1h-1zM5 7h1v1h-1zM9 7h1v1h-1zM1 8h1v1h-1zM3 8h5v1h-5zM9 8h1v1h-1zM1 9h1v1h-1zM4 9h1v1h-1zM6 9h1v1h-1zM9 9h1v1h-1zM1 10h1v1h-1zM3 10h1v1h-1zM7 10h3v1h-3z"></path><path id="g4e00_12" d="M9 0h1v1h-1zM0 1h11v1h-11z"></path><path id="g952e_12" d="M1 0h1v1h-1zM3 0h3v1h-3zM8 0h1v1h-1zM1 1h1v1h-1zM5 1h6v1h-6zM1 2h2v1h-2zM4 2h1v1h-1zM8 2h1v1h-1zM10 2h1v1h-1zM0 3h1v1h-1zM4 3h1v1h-1zM6 3h5v1h-5zM0 4h6v1h-6zM8 4h1v1h-1zM10 4h1v1h-1zM1 5h1v1h-1zM5 5h6v1h-6zM0 6h3v1h-3zM5 6h1v1h-1zM8 6h1v1h-1zM1 7h1v1h-1zM3 7h1v1h-1zM5 7h6v1h-6zM1 8h1v1h-1zM4 8h1v1h-1zM8 8h1v1h-1zM1 9h2v1h-2zM4 9h2v1h-2zM8 9h1v1h-1zM1 10h1v1h-1zM3 10h1v1h-1zM6 10h5v1h-5z"></path><path id="g7cca_12" d="M2 0h1v1h-1zM5 0h1v1h-1zM8 0h3v1h-3zM0 1h1v1h-1zM2 1h1v1h-1zM5 1h1v1h-1zM8 1h1v1h-1zM10 1h1v1h-1zM1 2h6v1h-6zM8 2h1v1h-1zM10 2h1v1h-1zM2 3h1v1h-1zM5 3h1v1h-1zM8 3h3v1h-3zM0 4h7v1h-7zM8 4h1v1h-1zM10 4h1v1h-1zM2 5h1v1h-1zM4 5h1v1h-1zM6 5h1v1h-1zM8 5h1v1h-1zM10 5h1v1h-1zM2 6h3v1h-3zM6 6h1v1h-1zM8 6h3v1h-3zM1 7h2v1h-2zM4 7h1v1h-1zM6 7h1v1h-1zM8 7h1v1h-1zM10 7h1v1h-1zM0 8h1v1h-1zM2 8h1v1h-1zM4 8h3v1h-3zM8 8h1v1h-1zM10 8h1v1h-1zM2 9h1v1h-1zM7 9h1v1h-1zM10 9h1v1h-1zM2 10h1v1h-1zM6 10h1v1h-1zM9 10h2v1h-2z"></path><path id="g9510_12" d="M1 0h1v1h-1zM5 0h1v1h-1zM9 0h1v1h-1zM1 1h1v1h-1zM6 1h1v1h-1zM8 1h1v1h-1zM1 2h3v1h-3zM5 2h5v1h-5zM0 3h1v1h-1zM5 3h1v1h-1zM9 3h1v1h-1zM0 4h4v1h-4zM5 4h1v1h-1zM9 4h1v1h-1zM2 5h1v1h-1zM5 5h5v1h-5zM0 6h4v1h-4zM6 6h1v1h-1zM8 6h1v1h-1zM2 7h1v1h-1zM6 7h1v1h-1zM8 7h1v1h-1zM2 8h1v1h-1zM4 8h1v1h-1zM6 8h1v1h-1zM8 8h1v1h-1zM10 8h1v1h-1zM2 9h2v1h-2zM5 9h1v1h-1zM8 9h1v1h-1zM10 9h1v1h-1zM2 10h1v1h-1zM4 10h1v1h-1zM8 10h3v1h-3z"></path><path id="g4e25_12" d="M1 0h9v1h-9zM4 1h1v1h-1zM6 1h1v1h-1zM1 2h1v1h-1zM4 2h1v1h-1zM6 2h1v1h-1zM9 2h1v1h-1zM2 3h1v1h-1zM4 3h1v1h-1zM6 3h1v1h-1zM8 3h1v1h-1zM4 4h1v1h-1zM6 4h1v1h-1zM1 5h9v1h-9zM1 6h1v1h-1zM1 7h1v1h-1zM1 8h1v1h-1zM1 9h1v1h-1zM0 10h1v1h-1z"></path><path id="g8865_12" d="M1 0h1v1h-1zM7 0h1v1h-1zM2 1h1v1h-1zM7 1h1v1h-1zM0 2h5v1h-5zM7 2h1v1h-1zM3 3h1v1h-1zM7 3h1v1h-1zM2 4h1v1h-1zM4 4h1v1h-1zM7 4h2v1h-2zM1 5h3v1h-3zM7 5h1v1h-1zM9 5h2v1h-2zM0 6h1v1h-1zM2 6h1v1h-1zM4 6h1v1h-1zM7 6h1v1h-1zM10 6h1v1h-1zM2 7h1v1h-1zM4 7h1v1h-1zM7 7h1v1h-1zM2 8h1v1h-1zM7 8h1v1h-1zM2 9h1v1h-1zM7 9h1v1h-1zM2 10h1v1h-1zM7 10h1v1h-1z"></path><path id="g51cf_12" d="M8 0h2v1h-2zM0 1h1v1h-1zM8 1h1v1h-1zM10 1h1v1h-1zM1 2h1v1h-1zM3 2h8v1h-8zM1 3h1v1h-1zM3 3h1v1h-1zM8 3h1v1h-1zM3 4h1v1h-1zM5 4h4v1h-4zM2 5h2v1h-2zM8 5h1v1h-1zM10 5h1v1h-1zM1 6h1v1h-1zM3 6h1v1h-1zM5 6h4v1h-4zM10 6h1v1h-1zM0 7h2v1h-2zM3 7h1v1h-1zM5 7h1v1h-1zM7 7h3v1h-3zM1 8h1v1h-1zM3 8h1v1h-1zM5 8h2v1h-2zM8 8h1v1h-1zM10 8h1v1h-1zM1 9h1v1h-1zM3 9h1v1h-1zM7 9h1v1h-1zM9 9h2v1h-2zM1 10h2v1h-2zM6 10h1v1h-1zM10 10h1v1h-1z"></path><path id="g9ad8_12" d="M5 0h1v1h-1zM0 1h11v1h-11zM3 3h5v1h-5zM3 4h1v1h-1zM7 4h1v1h-1zM1 5h9v1h-9zM1 6h1v1h-1zM9 6h1v1h-1zM1 7h1v1h-1zM3 7h5v1h-5zM9 7h1v1h-1zM1 8h1v1h-1zM3 8h1v1h-1zM7 8h1v1h-1zM9 8h1v1h-1zM1 9h1v1h-1zM3 9h5v1h-5zM9 9h1v1h-1zM1 10h1v1h-1zM8 10h2v1h-2z"></path><path id="g49_12" d="M0 0h3v1h-3zM1 1h1v1h-1zM1 2h1v1h-1zM1 3h1v1h-1zM1 4h1v1h-1zM1 5h1v1h-1zM1 6h1v1h-1zM0 7h3v1h-3z"></path><path id="g53_12" d="M1 0h4v1h-4zM0 1h1v1h-1zM0 2h1v1h-1zM1 3h3v1h-3zM4 4h1v1h-1zM4 5h1v1h-1zM4 6h1v1h-1zM0 7h4v1h-4z"></path><path id="g4f_12" d="M2 0h3v1h-3zM1 1h1v1h-1zM5 1h1v1h-1zM0 2h1v1h-1zM6 2h1v1h-1zM0 3h1v1h-1zM6 3h1v1h-1zM0 4h1v1h-1zM6 4h1v1h-1zM0 5h1v1h-1zM6 5h1v1h-1zM1 6h1v1h-1zM5 6h1v1h-1zM2 7h3v1h-3z"></path><path id="g964d_12" d="M0 0h4v1h-4zM6 0h1v1h-1zM0 1h1v1h-1zM3 1h1v1h-1zM6 1h5v1h-5zM0 2h1v1h-1zM2 2h1v1h-1zM5 2h2v1h-2zM9 2h1v1h-1zM0 3h2v1h-2zM7 3h2v1h-2zM0 4h1v1h-1zM2 4h1v1h-1zM5 4h2v1h-2zM9 4h2v1h-2zM0 5h1v1h-1zM3 5h1v1h-1zM7 5h1v1h-1zM0 6h1v1h-1zM3 6h1v1h-1zM5 6h6v1h-6zM0 7h2v1h-2zM3 7h1v1h-1zM5 7h1v1h-1zM7 7h1v1h-1zM0 8h1v1h-1zM2 8h1v1h-1zM4 8h7v1h-7zM0 9h1v1h-1zM7 9h1v1h-1zM0 10h1v1h-1zM7 10h1v1h-1z"></path><path id="g566a_12" d="M5 0h4v1h-4zM0 1h3v1h-3zM5 1h1v1h-1zM8 1h1v1h-1zM0 2h1v1h-1zM2 2h1v1h-1zM5 2h4v1h-4zM0 3h1v1h-1zM2 3h4v1h-4zM7 3h4v1h-4zM0 4h1v1h-1zM2 4h1v1h-1zM5 4h1v1h-1zM7 4h1v1h-1zM10 4h1v1h-1zM0 5h1v1h-1zM2 5h4v1h-4zM7 5h4v1h-4zM0 6h3v1h-3zM6 6h1v1h-1zM3 7h8v1h-8zM4 8h1v1h-1zM6 8h1v1h-1zM8 8h1v1h-1zM3 9h1v1h-1zM6 9h1v1h-1zM9 9h1v1h-1zM2 10h1v1h-1zM6 10h1v1h-1zM10 10h1v1h-1z"></path><path id="g70b9_12" d="M5 0h1v1h-1zM5 1h1v1h-1zM5 2h5v1h-5zM5 3h1v1h-1zM2 4h7v1h-7zM2 5h1v1h-1zM8 5h1v1h-1zM2 6h1v1h-1zM8 6h1v1h-1zM2 7h7v1h-7zM1 9h1v1h-1zM3 9h1v1h-1zM6 9h1v1h-1zM9 9h1v1h-1zM0 10h1v1h-1zM4 10h1v1h-1zM7 10h1v1h-1zM10 10h1v1h-1z"></path><path id="g6d4b_12" d="M0 0h1v1h-1zM2 0h5v1h-5zM10 0h1v1h-1zM1 1h2v1h-2zM6 1h1v1h-1zM8 1h1v1h-1zM10 1h1v1h-1zM2 2h1v1h-1zM4 2h1v1h-1zM6 2h1v1h-1zM8 2h1v1h-1zM10 2h1v1h-1zM0 3h1v1h-1zM2 3h1v1h-1zM4 3h1v1h-1zM6 3h1v1h-1zM8 3h1v1h-1zM10 3h1v1h-1zM1 4h2v1h-2zM4 4h1v1h-1zM6 4h1v1h-1zM8 4h1v1h-1zM10 4h1v1h-1zM2 5h1v1h-1zM4 5h1v1h-1zM6 5h1v1h-1zM8 5h1v1h-1zM10 5h1v1h-1zM2 6h1v1h-1zM4 6h1v1h-1zM6 6h1v1h-1zM8 6h1v1h-1zM10 6h1v1h-1zM0 7h2v1h-2zM4 7h1v1h-1zM8 7h1v1h-1zM10 7h1v1h-1zM1 8h1v1h-1zM3 8h1v1h-1zM5 8h1v1h-1zM10 8h1v1h-1zM1 9h2v1h-2zM6 9h1v1h-1zM10 9h1v1h-1zM1 10h1v1h-1zM8 10h3v1h-3z"></path><path id="g6307_12" d="M2 0h1v1h-1zM6 0h1v1h-1zM2 1h1v1h-1zM6 1h1v1h-1zM9 1h2v1h-2zM0 2h5v1h-5zM6 2h3v1h-3zM2 3h1v1h-1zM6 3h1v1h-1zM10 3h1v1h-1zM2 4h1v1h-1zM4 4h1v1h-1zM6 4h5v1h-5zM2 5h2v1h-2zM1 6h2v1h-2zM6 6h5v1h-5zM0 7h1v1h-1zM2 7h1v1h-1zM6 7h1v1h-1zM10 7h1v1h-1zM2 8h1v1h-1zM6 8h5v1h-5zM2 9h1v1h-1zM6 9h1v1h-1zM10 9h1v1h-1zM0 10h3v1h-3zM6 10h5v1h-5z"></path><path id="g57fa_14" d="M3 0h1v1h-1zM9 0h1v1h-1zM1 1h11v1h-11zM3 2h1v1h-1zM9 2h1v1h-1zM3 3h7v1h-7zM3 4h1v1h-1zM9 4h1v1h-1zM3 5h7v1h-7zM3 6h1v1h-1zM9 6h1v1h-1zM0 7h13v1h-13zM3 8h1v1h-1zM9 8h1v1h-1zM2 9h1v1h-1zM6 9h1v1h-1zM10 9h1v1h-1zM0 10h2v1h-2zM3 10h7v1h-7zM11 10h2v1h-2zM6 11h1v1h-1zM1 12h11v1h-11z"></path><path id="g672c_14" d="M6 0h1v1h-1zM6 1h1v1h-1zM0 2h13v1h-13zM6 3h1v1h-1zM5 4h3v1h-3zM4 5h1v1h-1zM6 5h1v1h-1zM8 5h1v1h-1zM3 6h1v1h-1zM6 6h1v1h-1zM9 6h1v1h-1zM2 7h1v1h-1zM6 7h1v1h-1zM10 7h1v1h-1zM1 8h1v1h-1zM6 8h1v1h-1zM11 8h1v1h-1zM0 9h1v1h-1zM3 9h7v1h-7zM12 9h1v1h-1zM6 10h1v1h-1zM6 11h1v1h-1zM6 12h1v1h-1z"></path><path id="g7f6e_12" d="M1 0h9v1h-9zM1 1h1v1h-1zM4 1h1v1h-1zM6 1h1v1h-1zM9 1h1v1h-1zM1 2h9v1h-9zM5 3h1v1h-1zM0 4h11v1h-11zM2 5h1v1h-1zM8 5h1v1h-1zM2 6h7v1h-7zM2 7h1v1h-1zM8 7h1v1h-1zM2 8h7v1h-7zM2 9h1v1h-1zM8 9h1v1h-1zM0 10h11v1h-11z"></path><path id="g4eae_12" d="M5 0h1v1h-1zM0 1h11v1h-11zM3 2h1v1h-1zM7 2h1v1h-1zM3 3h5v1h-5zM0 5h11v1h-11zM0 6h1v1h-1zM10 6h1v1h-1zM3 7h5v1h-5zM3 8h1v1h-1zM7 8h1v1h-1zM2 9h1v1h-1zM7 9h1v1h-1zM10 9h1v1h-1zM0 10h2v1h-2zM8 10h3v1h-3z"></path><path id="g5ea6_12" d="M5 0h1v1h-1zM1 1h10v1h-10zM1 2h1v1h-1zM4 2h1v1h-1zM7 2h1v1h-1zM1 3h9v1h-9zM1 4h1v1h-1zM4 4h1v1h-1zM7 4h1v1h-1zM1 5h1v1h-1zM4 5h4v1h-4zM1 6h1v1h-1zM1 7h1v1h-1zM3 7h6v1h-6zM1 8h1v1h-1zM4 8h1v1h-1zM7 8h1v1h-1zM0 9h1v1h-1zM5 9h2v1h-2zM0 10h1v1h-1zM2 10h3v1h-3zM7 10h3v1h-3z"></path><path id="g30_12" d="M1 0h3v1h-3zM0 1h1v1h-1zM4 1h1v1h-1zM0 2h1v1h-1zM4 2h1v1h-1zM0 3h1v1h-1zM4 3h1v1h-1zM0 4h1v1h-1zM4 4h1v1h-1zM0 5h1v1h-1zM4 5h1v1h-1zM0 6h1v1h-1zM4 6h1v1h-1zM1 7h3v1h-3z"></path><path id="g5bf9_12" d="M8 0h1v1h-1zM0 1h4v1h-4zM8 1h1v1h-1zM3 2h8v1h-8zM0 3h1v1h-1zM3 3h1v1h-1zM8 3h1v1h-1zM1 4h1v1h-1zM3 4h1v1h-1zM8 4h1v1h-1zM2 5h1v1h-1zM5 5h1v1h-1zM8 5h1v1h-1zM2 6h1v1h-1zM6 6h1v1h-1zM8 6h1v1h-1zM1 7h1v1h-1zM3 7h1v1h-1zM8 7h1v1h-1zM1 8h1v1h-1zM3 8h1v1h-1zM8 8h1v1h-1zM0 9h1v1h-1zM6 9h1v1h-1zM8 9h1v1h-1zM7 10h1v1h-1z"></path><path id="g6bd4_12" d="M0 0h1v1h-1zM5 0h1v1h-1zM0 1h1v1h-1zM5 1h1v1h-1zM0 2h1v1h-1zM5 2h1v1h-1zM8 2h1v1h-1zM0 3h1v1h-1zM5 3h1v1h-1zM7 3h1v1h-1zM0 4h4v1h-4zM5 4h2v1h-2zM0 5h1v1h-1zM5 5h1v1h-1zM0 6h1v1h-1zM5 6h1v1h-1zM0 7h1v1h-1zM5 7h1v1h-1zM0 8h1v1h-1zM2 8h2v1h-2zM5 8h1v1h-1zM9 8h1v1h-1zM0 9h2v1h-2zM5 9h1v1h-1zM9 9h1v1h-1zM0 10h1v1h-1zM6 10h4v1h-4z"></path><path id="g8272_12" d="M4 0h1v1h-1zM3 1h6v1h-6zM2 2h1v1h-1zM6 2h1v1h-1zM1 3h9v1h-9zM0 4h1v1h-1zM2 4h1v1h-1zM5 4h1v1h-1zM9 4h1v1h-1zM2 5h1v1h-1zM5 5h1v1h-1zM9 5h1v1h-1zM2 6h8v1h-8zM2 7h1v1h-1zM2 8h1v1h-1zM10 8h1v1h-1zM2 9h1v1h-1zM10 9h1v1h-1zM3 10h8v1h-8z"></path><path id="g76f8_12" d="M3 0h1v1h-1zM6 0h5v1h-5zM3 1h1v1h-1zM6 1h1v1h-1zM10 1h1v1h-1zM1 2h6v1h-6zM10 2h1v1h-1zM3 3h1v1h-1zM6 3h5v1h-5zM3 4h1v1h-1zM6 4h1v1h-1zM10 4h1v1h-1zM2 5h3v1h-3zM6 5h1v1h-1zM10 5h1v1h-1zM1 6h1v1h-1zM3 6h1v1h-1zM5 6h6v1h-6zM0 7h1v1h-1zM3 7h1v1h-1zM6 7h1v1h-1zM10 7h1v1h-1zM3 8h1v1h-1zM6 8h1v1h-1zM10 8h1v1h-1zM3 9h1v1h-1zM6 9h5v1h-5zM3 10h1v1h-1zM6 10h1v1h-1zM10 10h1v1h-1z"></path><path id="g9971_12" d="M1 0h1v1h-1zM5 0h1v1h-1zM1 1h1v1h-1zM5 1h5v1h-5zM1 2h5v1h-5zM9 2h1v1h-1zM0 3h1v1h-1zM3 3h1v1h-1zM5 3h3v1h-3zM9 3h1v1h-1zM0 4h1v1h-1zM2 4h1v1h-1zM4 4h2v1h-2zM7 4h1v1h-1zM9 4h1v1h-1zM2 5h1v1h-1zM5 5h1v1h-1zM7 5h1v1h-1zM9 5h1v1h-1zM2 6h1v1h-1zM5 6h3v1h-3zM9 6h1v1h-1zM2 7h1v1h-1zM5 7h1v1h-1zM8 7h2v1h-2zM2 8h1v1h-1zM4 8h2v1h-2zM10 8h1v1h-1zM2 9h2v1h-2zM5 9h1v1h-1zM10 9h1v1h-1zM2 10h1v1h-1zM6 10h5v1h-5z"></path><path id="g548c_12" d="M4 0h2v1h-2zM1 1h3v1h-3zM3 2h1v1h-1zM7 2h4v1h-4zM0 3h6v1h-6zM7 3h1v1h-1zM10 3h1v1h-1zM3 4h1v1h-1zM7 4h1v1h-1zM10 4h1v1h-1zM2 5h3v1h-3zM7 5h1v1h-1zM10 5h1v1h-1zM2 6h2v1h-2zM5 6h1v1h-1zM7 6h1v1h-1zM10 6h1v1h-1zM1 7h1v1h-1zM3 7h1v1h-1zM5 7h1v1h-1zM7 7h1v1h-1zM10 7h1v1h-1zM0 8h1v1h-1zM3 8h1v1h-1zM7 8h1v1h-1zM10 8h1v1h-1zM3 9h1v1h-1zM7 9h4v1h-4zM3 10h1v1h-1z"></path><path id="g6570_14" d="M0 0h1v1h-1zM3 0h1v1h-1zM6 0h1v1h-1zM8 0h1v1h-1zM1 1h1v1h-1zM3 1h1v1h-1zM5 1h1v1h-1zM8 1h1v1h-1zM0 2h7v1h-7zM8 2h5v1h-5zM2 3h3v1h-3zM7 3h1v1h-1zM11 3h1v1h-1zM1 4h1v1h-1zM3 4h1v1h-1zM5 4h1v1h-1zM7 4h1v1h-1zM11 4h1v1h-1zM0 5h1v1h-1zM3 5h1v1h-1zM6 5h1v1h-1zM8 5h1v1h-1zM11 5h1v1h-1zM2 6h1v1h-1zM8 6h1v1h-1zM10 6h1v1h-1zM0 7h7v1h-7zM8 7h1v1h-1zM10 7h1v1h-1zM2 8h1v1h-1zM5 8h1v1h-1zM9 8h1v1h-1zM1 9h2v1h-2zM4 9h1v1h-1zM9 9h1v1h-1zM3 10h1v1h-1zM8 10h1v1h-1zM10 10h1v1h-1zM2 11h1v1h-1zM4 11h1v1h-1zM7 11h1v1h-1zM11 11h1v1h-1zM0 12h2v1h-2zM5 12h2v1h-2zM12 12h1v1h-1z"></path><path id="g7801_14" d="M0 0h5v1h-5zM6 0h5v1h-5zM2 1h1v1h-1zM10 1h1v1h-1zM2 2h1v1h-1zM6 2h1v1h-1zM10 2h1v1h-1zM1 3h1v1h-1zM6 3h1v1h-1zM10 3h1v1h-1zM1 4h4v1h-4zM6 4h1v1h-1zM10 4h1v1h-1zM0 5h2v1h-2zM4 5h1v1h-1zM6 5h7v1h-7zM1 6h1v1h-1zM4 6h1v1h-1zM12 6h1v1h-1zM1 7h1v1h-1zM4 7h7v1h-7zM12 7h1v1h-1zM1 8h1v1h-1zM4 8h1v1h-1zM12 8h1v1h-1zM1 9h4v1h-4zM12 9h1v1h-1zM1 10h1v1h-1zM4 10h1v1h-1zM9 10h1v1h-1zM11 10h1v1h-1zM10 11h1v1h-1z"></path><path id="g8865_14" d="M1 0h1v1h-1zM8 0h1v1h-1zM2 1h1v1h-1zM8 1h1v1h-1zM0 2h5v1h-5zM8 2h1v1h-1zM4 3h1v1h-1zM8 3h1v1h-1zM3 4h1v1h-1zM8 4h1v1h-1zM10 4h1v1h-1zM2 5h1v1h-1zM8 5h1v1h-1zM11 5h1v1h-1zM1 6h2v1h-2zM4 6h1v1h-1zM8 6h1v1h-1zM12 6h1v1h-1zM0 7h1v1h-1zM2 7h2v1h-2zM8 7h1v1h-1zM12 7h1v1h-1zM2 8h1v1h-1zM4 8h1v1h-1zM8 8h1v1h-1zM2 9h1v1h-1zM8 9h1v1h-1zM2 10h1v1h-1zM8 10h1v1h-1zM2 11h1v1h-1zM8 11h1v1h-1zM2 12h1v1h-1zM8 12h1v1h-1z"></path><path id="g5149_14" d="M6 0h1v1h-1zM2 1h1v1h-1zM6 1h1v1h-1zM10 1h1v1h-1zM3 2h1v1h-1zM6 2h1v1h-1zM10 2h1v1h-1zM3 3h1v1h-1zM6 3h1v1h-1zM9 3h1v1h-1zM6 4h1v1h-1zM8 4h1v1h-1zM0 5h13v1h-13zM4 6h1v1h-1zM7 6h1v1h-1zM4 7h1v1h-1zM7 7h1v1h-1zM4 8h1v1h-1zM7 8h1v1h-1zM3 9h1v1h-1zM7 9h1v1h-1zM3 10h1v1h-1zM7 10h1v1h-1zM12 10h1v1h-1zM2 11h1v1h-1zM7 11h1v1h-1zM12 11h1v1h-1zM0 12h2v1h-2zM8 12h5v1h-5z"></path><path id="g51cf_14" d="M9 0h1v1h-1zM11 0h1v1h-1zM0 1h1v1h-1zM9 1h1v1h-1zM12 1h1v1h-1zM1 2h1v1h-1zM4 2h9v1h-9zM1 3h1v1h-1zM4 3h1v1h-1zM9 3h1v1h-1zM4 4h1v1h-1zM6 4h4v1h-4zM3 5h2v1h-2zM9 5h1v1h-1zM12 5h1v1h-1zM2 6h1v1h-1zM4 6h1v1h-1zM6 6h4v1h-4zM12 6h1v1h-1zM2 7h1v1h-1zM4 7h1v1h-1zM6 7h1v1h-1zM8 7h2v1h-2zM11 7h1v1h-1zM0 8h2v1h-2zM4 8h1v1h-1zM6 8h1v1h-1zM8 8h2v1h-2zM11 8h1v1h-1zM1 9h1v1h-1zM4 9h1v1h-1zM6 9h3v1h-3zM10 9h1v1h-1zM12 9h1v1h-1zM1 10h1v1h-1zM3 10h1v1h-1zM9 10h2v1h-2zM12 10h1v1h-1zM1 11h1v1h-1zM3 11h1v1h-1zM8 11h1v1h-1zM11 11h2v1h-2zM2 12h1v1h-1zM7 12h1v1h-1zM12 12h1v1h-1z"></path><path id="g6e05_14" d="M1 0h1v1h-1zM8 0h1v1h-1zM2 1h1v1h-1zM4 1h9v1h-9zM8 2h1v1h-1zM0 3h1v1h-1zM5 3h7v1h-7zM1 4h1v1h-1zM8 4h1v1h-1zM3 5h10v1h-10zM2 6h1v1h-1zM5 6h1v1h-1zM11 6h1v1h-1zM2 7h1v1h-1zM5 7h7v1h-7zM0 8h2v1h-2zM5 8h1v1h-1zM11 8h1v1h-1zM1 9h1v1h-1zM5 9h7v1h-7zM1 10h1v1h-1zM5 10h1v1h-1zM11 10h1v1h-1zM1 11h1v1h-1zM5 11h1v1h-1zM9 11h1v1h-1zM11 11h1v1h-1zM1 12h1v1h-1zM5 12h1v1h-1zM10 12h1v1h-1z"></path><path id="g6670_14" d="M5 0h1v1h-1zM0 1h4v1h-4zM5 1h1v1h-1zM10 1h3v1h-3zM0 2h1v1h-1zM3 2h1v1h-1zM5 2h1v1h-1zM8 2h2v1h-2zM0 3h1v1h-1zM3 3h6v1h-6zM0 4h1v1h-1zM3 4h1v1h-1zM5 4h1v1h-1zM8 4h5v1h-5zM0 5h4v1h-4zM5 5h2v1h-2zM8 5h1v1h-1zM11 5h1v1h-1zM0 6h1v1h-1zM3 6h3v1h-3zM7 6h2v1h-2zM11 6h1v1h-1zM0 7h1v1h-1zM3 7h1v1h-1zM5 7h1v1h-1zM8 7h1v1h-1zM11 7h1v1h-1zM0 8h1v1h-1zM3 8h1v1h-1zM5 8h1v1h-1zM8 8h1v1h-1zM11 8h1v1h-1zM0 9h4v1h-4zM5 9h1v1h-1zM8 9h1v1h-1zM11 9h1v1h-1zM0 10h1v1h-1zM3 10h1v1h-1zM5 10h1v1h-1zM7 10h1v1h-1zM11 10h1v1h-1zM5 11h1v1h-1zM7 11h1v1h-1zM11 11h1v1h-1zM5 12h2v1h-2zM11 12h1v1h-1z"></path><path id="g5ea6_14" d="M7 0h1v1h-1zM2 1h11v1h-11zM2 2h1v1h-1zM5 2h1v1h-1zM10 2h1v1h-1zM2 3h11v1h-11zM2 4h1v1h-1zM5 4h1v1h-1zM10 4h1v1h-1zM2 5h1v1h-1zM5 5h6v1h-6zM2 6h1v1h-1zM2 7h1v1h-1zM4 7h8v1h-8zM2 8h1v1h-1zM5 8h1v1h-1zM10 8h1v1h-1zM2 9h1v1h-1zM6 9h1v1h-1zM9 9h1v1h-1zM1 10h1v1h-1zM7 10h2v1h-2zM1 11h1v1h-1zM6 11h1v1h-1zM9 11h1v1h-1zM0 12h1v1h-1zM3 12h3v1h-3zM10 12h3v1h-3z"></path><path id="g8272_14" d="M4 0h1v1h-1zM3 1h7v1h-7zM3 2h1v1h-1zM8 2h1v1h-1zM2 3h1v1h-1zM7 3h1v1h-1zM1 4h10v1h-10zM0 5h1v1h-1zM2 5h1v1h-1zM6 5h1v1h-1zM10 5h1v1h-1zM2 6h1v1h-1zM6 6h1v1h-1zM10 6h1v1h-1zM2 7h9v1h-9zM2 8h1v1h-1zM2 9h1v1h-1zM12 9h1v1h-1zM2 10h1v1h-1zM12 10h1v1h-1zM2 11h1v1h-1zM12 11h1v1h-1zM3 12h10v1h-10z"></path><path id="g9636_14" d="M8 0h1v1h-1zM0 1h4v1h-4zM8 1h1v1h-1zM0 2h1v1h-1zM3 2h1v1h-1zM7 2h1v1h-1zM9 2h1v1h-1zM0 3h1v1h-1zM2 3h1v1h-1zM6 3h1v1h-1zM10 3h1v1h-1zM0 4h2v1h-2zM5 4h1v1h-1zM11 4h1v1h-1zM0 5h1v1h-1zM2 5h1v1h-1zM4 5h1v1h-1zM6 5h1v1h-1zM10 5h1v1h-1zM12 5h1v1h-1zM0 6h1v1h-1zM3 6h1v1h-1zM6 6h1v1h-1zM10 6h1v1h-1zM0 7h1v1h-1zM3 7h1v1h-1zM6 7h1v1h-1zM10 7h1v1h-1zM0 8h2v1h-2zM3 8h1v1h-1zM6 8h1v1h-1zM10 8h1v1h-1zM0 9h1v1h-1zM2 9h1v1h-1zM6 9h1v1h-1zM10 9h1v1h-1zM0 10h1v1h-1zM6 10h1v1h-1zM10 10h1v1h-1zM0 11h1v1h-1zM5 11h1v1h-1zM10 11h1v1h-1zM0 12h1v1h-1zM4 12h1v1h-1zM10 12h1v1h-1z"></path><path id="g66f2_14" d="M3 0h1v1h-1zM7 0h1v1h-1zM3 1h1v1h-1zM7 1h1v1h-1zM3 2h1v1h-1zM7 2h1v1h-1zM0 3h11v1h-11zM0 4h1v1h-1zM3 4h1v1h-1zM7 4h1v1h-1zM10 4h1v1h-1zM0 5h1v1h-1zM3 5h1v1h-1zM7 5h1v1h-1zM10 5h1v1h-1zM0 6h1v1h-1zM3 6h1v1h-1zM7 6h1v1h-1zM10 6h1v1h-1zM0 7h11v1h-11zM0 8h1v1h-1zM3 8h1v1h-1zM7 8h1v1h-1zM10 8h1v1h-1zM0 9h1v1h-1zM3 9h1v1h-1zM7 9h1v1h-1zM10 9h1v1h-1zM0 10h1v1h-1zM3 10h1v1h-1zM7 10h1v1h-1zM10 10h1v1h-1zM0 11h11v1h-11zM0 12h1v1h-1zM10 12h1v1h-1z"></path><path id="g7ebf_14" d="M2 0h1v1h-1zM8 0h1v1h-1zM10 0h1v1h-1zM2 1h1v1h-1zM8 1h1v1h-1zM11 1h1v1h-1zM1 2h1v1h-1zM8 2h5v1h-5zM1 3h1v1h-1zM3 3h1v1h-1zM5 3h4v1h-4zM0 4h3v1h-3zM8 4h1v1h-1zM2 5h1v1h-1zM8 5h5v1h-5zM1 6h1v1h-1zM3 6h1v1h-1zM5 6h4v1h-4zM0 7h3v1h-3zM8 7h1v1h-1zM11 7h1v1h-1zM8 8h1v1h-1zM10 8h1v1h-1zM2 9h2v1h-2zM9 9h1v1h-1zM0 10h2v1h-2zM8 10h1v1h-1zM10 10h1v1h-1zM12 10h1v1h-1zM7 11h1v1h-1zM11 11h2v1h-2zM5 12h2v1h-2zM12 12h1v1h-1z"></path><path id="g4e0a_12" d="M5 0h1v1h-1zM5 1h1v1h-1zM5 2h1v1h-1zM5 3h1v1h-1zM5 4h5v1h-5zM5 5h1v1h-1zM5 6h1v1h-1zM5 7h1v1h-1zM5 8h1v1h-1zM5 9h1v1h-1zM0 10h11v1h-11z"></path><path id="g5f20_12" d="M0 0h3v1h-3zM5 0h1v1h-1zM9 0h1v1h-1zM2 1h1v1h-1zM5 1h1v1h-1zM9 1h1v1h-1zM2 2h1v1h-1zM5 2h1v1h-1zM8 2h1v1h-1zM0 3h3v1h-3zM5 3h3v1h-3zM0 4h1v1h-1zM5 4h1v1h-1zM0 5h1v1h-1zM3 5h8v1h-8zM0 6h3v1h-3zM5 6h1v1h-1zM7 6h1v1h-1zM2 7h1v1h-1zM5 7h1v1h-1zM7 7h1v1h-1zM2 8h1v1h-1zM5 8h1v1h-1zM8 8h1v1h-1zM0 9h1v1h-1zM2 9h1v1h-1zM5 9h2v1h-2zM9 9h1v1h-1zM1 10h1v1h-1zM5 10h1v1h-1zM10 10h1v1h-1z"></path><path id="g4e0b_12" d="M0 0h11v1h-11zM5 1h1v1h-1zM5 2h1v1h-1zM5 3h2v1h-2zM5 4h1v1h-1zM7 4h1v1h-1zM5 5h1v1h-1zM8 5h1v1h-1zM5 6h1v1h-1zM8 6h1v1h-1zM5 7h1v1h-1zM5 8h1v1h-1zM5 9h1v1h-1z"></path><path id="g5220_12" d="M0 0h3v1h-3zM4 0h3v1h-3zM10 0h1v1h-1zM0 1h1v1h-1zM2 1h1v1h-1zM4 1h1v1h-1zM6 1h1v1h-1zM8 1h1v1h-1zM10 1h1v1h-1zM0 2h1v1h-1zM2 2h1v1h-1zM4 2h1v1h-1zM6 2h1v1h-1zM8 2h1v1h-1zM10 2h1v1h-1zM0 3h1v1h-1zM2 3h1v1h-1zM4 3h1v1h-1zM6 3h1v1h-1zM8 3h1v1h-1zM10 3h1v1h-1zM0 4h9v1h-9zM10 4h1v1h-1zM0 5h1v1h-1zM2 5h1v1h-1zM4 5h1v1h-1zM6 5h1v1h-1zM8 5h1v1h-1zM10 5h1v1h-1zM0 6h1v1h-1zM2 6h1v1h-1zM4 6h1v1h-1zM6 6h1v1h-1zM8 6h1v1h-1zM10 6h1v1h-1zM0 7h1v1h-1zM2 7h1v1h-1zM4 7h1v1h-1zM6 7h1v1h-1zM8 7h1v1h-1zM10 7h1v1h-1zM0 8h1v1h-1zM2 8h1v1h-1zM4 8h1v1h-1zM6 8h1v1h-1zM10 8h1v1h-1zM0 9h1v1h-1zM2 9h1v1h-1zM4 9h1v1h-1zM6 9h1v1h-1zM10 9h1v1h-1zM0 10h1v1h-1zM2 10h2v1h-2zM5 10h2v1h-2zM8 10h3v1h-3z"></path><path id="g9664_12" d="M0 0h4v1h-4zM7 0h1v1h-1zM0 1h1v1h-1zM3 1h1v1h-1zM6 1h1v1h-1zM8 1h1v1h-1zM0 2h1v1h-1zM2 2h1v1h-1zM5 2h1v1h-1zM9 2h1v1h-1zM0 3h2v1h-2zM4 3h1v1h-1zM6 3h3v1h-3zM10 3h1v1h-1zM0 4h1v1h-1zM2 4h1v1h-1zM7 4h1v1h-1zM0 5h1v1h-1zM3 5h8v1h-8zM0 6h1v1h-1zM3 6h1v1h-1zM7 6h1v1h-1zM0 7h3v1h-3zM5 7h1v1h-1zM7 7h1v1h-1zM9 7h1v1h-1zM0 8h1v1h-1zM4 8h1v1h-1zM7 8h1v1h-1zM10 8h1v1h-1zM0 9h1v1h-1zM3 9h1v1h-1zM7 9h1v1h-1zM10 9h1v1h-1zM0 10h1v1h-1zM6 10h2v1h-2z"></path><path id="g4fe1_12" d="M3 0h1v1h-1zM6 0h1v1h-1zM3 1h1v1h-1zM7 1h1v1h-1zM2 2h1v1h-1zM4 2h7v1h-7zM2 3h1v1h-1zM1 4h2v1h-2zM5 4h5v1h-5zM0 5h1v1h-1zM2 5h1v1h-1zM2 6h1v1h-1zM5 6h5v1h-5zM2 7h1v1h-1zM2 8h1v1h-1zM5 8h5v1h-5zM2 9h1v1h-1zM5 9h1v1h-1zM9 9h1v1h-1zM2 10h1v1h-1zM5 10h5v1h-5z"></path><path id="g606f_12" d="M4 0h1v1h-1zM2 1h7v1h-7zM2 2h1v1h-1zM8 2h1v1h-1zM2 3h7v1h-7zM2 4h1v1h-1zM8 4h1v1h-1zM2 5h7v1h-7zM2 6h1v1h-1zM8 6h1v1h-1zM2 7h7v1h-7zM1 8h1v1h-1zM3 8h1v1h-1zM5 8h1v1h-1zM9 8h1v1h-1zM1 9h1v1h-1zM3 9h1v1h-1zM6 9h1v1h-1zM8 9h1v1h-1zM10 9h1v1h-1zM0 10h1v1h-1zM4 10h5v1h-5z"></path><path id="g5168_12" d="M5 0h1v1h-1zM4 1h1v1h-1zM6 1h1v1h-1zM3 2h1v1h-1zM7 2h1v1h-1zM2 3h1v1h-1zM8 3h1v1h-1zM0 4h2v1h-2zM3 4h5v1h-5zM9 4h2v1h-2zM5 5h1v1h-1zM5 6h1v1h-1zM3 7h5v1h-5zM5 8h1v1h-1zM5 9h1v1h-1zM1 10h9v1h-9z"></path><path id="g5c4f_12" d="M2 0h9v1h-9zM2 1h1v1h-1zM10 1h1v1h-1zM2 2h9v1h-9zM2 3h1v1h-1zM4 3h1v1h-1zM9 3h1v1h-1zM2 4h1v1h-1zM5 4h1v1h-1zM8 4h1v1h-1zM2 5h9v1h-9zM2 6h1v1h-1zM5 6h1v1h-1zM8 6h1v1h-1zM2 7h9v1h-9zM2 8h1v1h-1zM5 8h1v1h-1zM8 8h1v1h-1zM1 9h1v1h-1zM4 9h1v1h-1zM8 9h1v1h-1zM0 10h1v1h-1zM3 10h1v1h-1zM8 10h1v1h-1z"></path><path id="g9002_12" d="M1 0h1v1h-1zM8 0h2v1h-2zM2 1h1v1h-1zM4 1h4v1h-4zM2 2h1v1h-1zM7 2h1v1h-1zM4 3h7v1h-7zM0 4h3v1h-3zM7 4h1v1h-1zM2 5h1v1h-1zM5 5h5v1h-5zM2 6h1v1h-1zM5 6h1v1h-1zM9 6h1v1h-1zM2 7h1v1h-1zM5 7h5v1h-5zM2 8h1v1h-1zM5 8h1v1h-1zM9 8h1v1h-1zM1 9h1v1h-1zM3 9h1v1h-1zM0 10h1v1h-1zM4 10h7v1h-7z"></path><path id="g5927_12" d="M5 0h1v1h-1zM5 1h1v1h-1zM5 2h1v1h-1zM0 3h11v1h-11zM5 4h1v1h-1zM5 5h1v1h-1zM4 6h1v1h-1zM6 6h1v1h-1zM4 7h1v1h-1zM6 7h1v1h-1zM3 8h1v1h-1zM7 8h1v1h-1zM2 9h1v1h-1zM8 9h1v1h-1zM0 10h2v1h-2zM9 10h2v1h-2z"></path><path id="g5c55_12" d="M1 0h9v1h-9zM1 1h1v1h-1zM9 1h1v1h-1zM1 2h9v1h-9zM1 3h1v1h-1zM4 3h1v1h-1zM7 3h1v1h-1zM1 4h9v1h-9zM1 5h1v1h-1zM4 5h1v1h-1zM7 5h1v1h-1zM1 6h10v1h-10zM1 7h1v1h-1zM3 7h1v1h-1zM6 7h1v1h-1zM9 7h1v1h-1zM1 8h1v1h-1zM3 8h1v1h-1zM7 8h2v1h-2zM0 9h1v1h-1zM3 9h1v1h-1zM5 9h1v1h-1zM8 9h1v1h-1zM0 10h1v1h-1zM3 10h2v1h-2zM9 10h2v1h-2z"></path><path id="g28_12" d="M2 0h1v1h-1zM1 1h1v1h-1zM1 2h1v1h-1zM0 3h1v1h-1zM0 4h1v1h-1zM0 5h1v1h-1zM0 6h1v1h-1zM0 7h1v1h-1zM1 8h1v1h-1zM1 9h1v1h-1zM2 10h1v1h-1z"></path><path id="g29_12" d="M0 0h1v1h-1zM1 1h1v1h-1zM1 2h1v1h-1zM2 3h1v1h-1zM2 4h1v1h-1zM2 5h1v1h-1zM2 6h1v1h-1zM2 7h1v1h-1zM1 8h1v1h-1zM1 9h1v1h-1zM0 10h1v1h-1z"></path><clipPath id="cl0"><rect x="0" y="0" width="1026" height="652"></rect></clipPath></defs><use href="#g5149_13b" x="35" y="4" fill="rgb(51, 51, 51)"></use><use href="#g5f71_13b" x="48" y="4" fill="rgb(51, 51, 51)"></use><use href="#g9b54_13b" x="61" y="4" fill="rgb(51, 51, 51)"></use><use href="#g672f_13b" x="74" y="4" fill="rgb(51, 51, 51)"></use><use href="#g624b_13b" x="87" y="4" fill="rgb(51, 51, 51)"></use><use href="#g5b98_13" x="724" y="5" fill="rgb(28, 28, 28)"></use><use href="#g65b9_13" x="737" y="5" fill="rgb(28, 28, 28)"></use><use href="#g7fa4_13" x="750" y="5" fill="rgb(28, 28, 28)"></use><use href="#g767b_13" x="813" y="5" fill="rgb(28, 28, 28)"></use><use href="#g5f55_13" x="826" y="5" fill="rgb(28, 28, 28)"></use><use href="#g6d4f_12" x="30" y="49" fill="rgb(189, 189, 189)"></use><use href="#g89c8_12" x="42" y="49" fill="rgb(189, 189, 189)"></use><use href="#g56fe_12" x="55" y="49" fill="rgb(189, 189, 189)"></use><use href="#g7247_12" x="66" y="49" fill="rgb(189, 189, 189)"></use><use href="#g6253_12" x="127" y="62" fill="rgb(182, 182, 182)"></use><use href="#g5f00_12" x="139" y="62" fill="rgb(182, 182, 182)"></use><use href="#g4fdd_12" x="169" y="62" fill="rgb(182, 182, 182)"></use><use href="#g5b58_12" x="181" y="62" fill="rgb(182, 182, 182)"></use><use href="#g53e6_12" x="212" y="62" fill="rgb(182, 182, 182)"></use><use href="#g5b58_12" x="223" y="62" fill="rgb(182, 182, 182)"></use><use href="#g5c3a_12" x="259" y="62" fill="rgb(182, 182, 182)"></use><use href="#g5bf8_12" x="272" y="62" fill="rgb(182, 182, 182)"></use><use href="#g88c1_12" x="316" y="62" fill="rgb(182, 182, 182)"></use><use href="#g526a_12" x="328" y="62" fill="rgb(182, 182, 182)"></use><use href="#g65cb_12" x="373" y="62" fill="rgb(182, 182, 182)"></use><use href="#g8f6c_12" x="385" y="62" fill="rgb(182, 182, 182)"></use><use href="#g62a5_12" x="430" y="62" fill="rgb(182, 182, 182)"></use><use href="#g540d_12" x="442" y="62" fill="rgb(182, 182, 182)"></use><use href="#g7167_12" x="454" y="62" fill="rgb(182, 182, 182)"></use><use href="#g8fb9_12" x="484" y="62" fill="rgb(182, 182, 182)"></use><use href="#g6846_12" x="496" y="62" fill="rgb(182, 182, 182)"></use><use href="#g62fc_12" x="526" y="62" fill="rgb(182, 182, 182)"></use><use href="#g56fe_12" x="539" y="62" fill="rgb(182, 182, 182)"></use><use href="#g6a21_12" x="568" y="62" fill="rgb(182, 182, 182)"></use><use href="#g677f_12" x="580" y="62" fill="rgb(182, 182, 182)"></use><use href="#g753b_12" x="610" y="62" fill="rgb(182, 182, 182)"></use><use href="#g7b14_12" x="622" y="62" fill="rgb(182, 182, 182)"></use><use href="#g57fa_12" x="728" y="63" fill="rgb(143, 184, 248)"></use><use href="#g672c_12" x="740" y="63" fill="rgb(143, 184, 248)"></use><use href="#g8c03_12" x="752" y="63" fill="rgb(143, 184, 248)"></use><use href="#g6574_12" x="764" y="63" fill="rgb(143, 184, 248)"></use><use href="#g6570_12" x="807" y="63" fill="rgb(190, 190, 190)"></use><use href="#g7801_12" x="819" y="63" fill="rgb(190, 190, 190)"></use><use href="#g6697_12" x="831" y="63" fill="rgb(190, 190, 190)"></use><use href="#g623f_12" x="843" y="63" fill="rgb(190, 190, 190)"></use><use href="#g6587_12" x="900" y="63" fill="rgb(190, 190, 190)"></use><use href="#g5b57_12" x="912" y="63" fill="rgb(190, 190, 190)"></use><use href="#g6c34_12" x="980" y="63" fill="rgb(190, 190, 190)"></use><use href="#g5370_12" x="993" y="63" fill="rgb(190, 190, 190)"></use><use href="#g6253_15b" x="318" y="291" fill="rgb(255, 255, 255)"></use><use href="#g5f00_15b" x="333" y="292" fill="rgb(255, 255, 255)"></use><use href="#g56fe_15b" x="349" y="292" fill="rgb(255, 255, 255)"></use><use href="#g7247_15b" x="363" y="291" fill="rgb(255, 255, 255)"></use><use href="#g652f_12" x="294" y="350" fill="rgb(184, 184, 184)"></use><use href="#g6301_12" x="306" y="350" fill="rgb(184, 184, 184)"></use><use href="#g62d6_12" x="318" y="350" fill="rgb(184, 184, 184)"></use><use href="#g62fd_12" x="330" y="350" fill="rgb(184, 184, 184)"></use><use href="#g56fe_12" x="343" y="350" fill="rgb(184, 184, 184)"></use><use href="#g7247_12" x="354" y="350" fill="rgb(184, 184, 184)"></use><use href="#g5230_12" x="366" y="350" fill="rgb(184, 184, 184)"></use><use href="#g6b64_12" x="378" y="350" fill="rgb(184, 184, 184)"></use><use href="#g5904_12" x="390" y="350" fill="rgb(184, 184, 184)"></use><use href="#g8bd5_12" x="322" y="382" fill="rgb(184, 184, 184)"></use><use href="#g8bd5_12" x="334" y="382" fill="rgb(184, 184, 184)"></use><use href="#g6837_12" x="346" y="382" fill="rgb(184, 184, 184)"></use><use href="#g7247_12" x="358" y="382" fill="rgb(184, 184, 184)"></use><use href="#g5206_12" x="355" y="96" fill="rgb(212, 212, 212)"></use><use href="#g4eab_12" x="367" y="96" fill="rgb(212, 212, 212)"></use><use href="#g4fdd_12" x="423" y="96" fill="rgb(90, 90, 90)"></use><use href="#g5b58_12" x="435" y="96" fill="rgb(90, 90, 90)"></use><use href="#g52a8_12" x="447" y="96" fill="rgb(90, 90, 90)"></use><use href="#g4f5c_12" x="459" y="96" fill="rgb(90, 90, 90)"></use><use href="#g64a4_12" x="517" y="96" fill="rgb(90, 90, 90)"></use><use href="#g9500_12" x="529" y="96" fill="rgb(90, 90, 90)"></use><use href="#g91cd_12" x="605" y="96" fill="rgb(90, 90, 90)"></use><use href="#g505a_12" x="617" y="96" fill="rgb(90, 90, 90)"></use><use href="#g8fd8_12" x="672" y="96" fill="rgb(90, 90, 90)"></use><use href="#g539f_12" x="684" y="96" fill="rgb(90, 90, 90)"></use><use href="#g76f4_14" x="733" y="95" fill="rgb(196, 196, 196)"></use><use href="#g65b9_14" x="747" y="95" fill="rgb(196, 196, 196)"></use><use href="#g56fe_14" x="762" y="95" fill="rgb(196, 196, 196)"></use><use href="#g4e00_14" x="733" y="134" fill="rgb(196, 196, 196)"></use><use href="#g952e_14" x="747" y="128" fill="rgb(196, 196, 196)"></use><use href="#g8bbe_14" x="761" y="128" fill="rgb(196, 196, 196)"></use><use href="#g7f6e_14" x="775" y="128" fill="rgb(196, 196, 196)"></use><use href="#g81ea_12" x="758" y="171" fill="rgb(192, 192, 192)"></use><use href="#g52a8_12" x="768" y="171" fill="rgb(192, 192, 192)"></use><use href="#g7f8e_12" x="780" y="171" fill="rgb(192, 192, 192)"></use><use href="#g5316_12" x="792" y="171" fill="rgb(192, 192, 192)"></use><use href="#g81ea_12" x="848" y="171" fill="rgb(192, 192, 192)"></use><use href="#g52a8_12" x="858" y="171" fill="rgb(192, 192, 192)"></use><use href="#g66dd_12" x="870" y="171" fill="rgb(192, 192, 192)"></use><use href="#g5149_12" x="882" y="171" fill="rgb(192, 192, 192)"></use><use href="#g81ea_12" x="932" y="171" fill="rgb(192, 192, 192)"></use><use href="#g52a8_12" x="942" y="171" fill="rgb(192, 192, 192)"></use><use href="#g767d_12" x="956" y="171" fill="rgb(192, 192, 192)"></use><use href="#g5e73_12" x="966" y="171" fill="rgb(192, 192, 192)"></use><use href="#g8861_12" x="978" y="171" fill="rgb(192, 192, 192)"></use><use href="#g4e00_12" x="756" y="205" fill="rgb(192, 192, 192)"></use><use href="#g952e_12" x="768" y="201" fill="rgb(192, 192, 192)"></use><use href="#g6a21_12" x="780" y="201" fill="rgb(192, 192, 192)"></use><use href="#g7cca_12" x="792" y="201" fill="rgb(192, 192, 192)"></use><use href="#g4e00_12" x="846" y="205" fill="rgb(192, 192, 192)"></use><use href="#g952e_12" x="858" y="201" fill="rgb(192, 192, 192)"></use><use href="#g9510_12" x="870" y="201" fill="rgb(192, 192, 192)"></use><use href="#g5316_12" x="882" y="201" fill="rgb(192, 192, 192)"></use><use href="#g4e25_12" x="930" y="201" fill="rgb(192, 192, 192)"></use><use href="#g91cd_12" x="942" y="201" fill="rgb(192, 192, 192)"></use><use href="#g767d_12" x="956" y="201" fill="rgb(192, 192, 192)"></use><use href="#g5e73_12" x="966" y="201" fill="rgb(192, 192, 192)"></use><use href="#g8861_12" x="978" y="201" fill="rgb(192, 192, 192)"></use><use href="#g4e00_12" x="756" y="235" fill="rgb(192, 192, 192)"></use><use href="#g952e_12" x="768" y="231" fill="rgb(192, 192, 192)"></use><use href="#g8865_12" x="780" y="231" fill="rgb(192, 192, 192)"></use><use href="#g5149_12" x="792" y="231" fill="rgb(192, 192, 192)"></use><use href="#g4e00_12" x="846" y="235" fill="rgb(192, 192, 192)"></use><use href="#g952e_12" x="858" y="231" fill="rgb(192, 192, 192)"></use><use href="#g51cf_12" x="870" y="231" fill="rgb(192, 192, 192)"></use><use href="#g5149_12" x="882" y="231" fill="rgb(192, 192, 192)"></use><use href="#g9ad8_12" x="933" y="231" fill="rgb(192, 192, 192)"></use><use href="#g49_12" x="945" y="233" fill="rgb(192, 192, 192)"></use><use href="#g53_12" x="949" y="233" fill="rgb(192, 192, 192)"></use><use href="#g4f_12" x="955" y="233" fill="rgb(192, 192, 192)"></use><use href="#g964d_12" x="963" y="231" fill="rgb(192, 192, 192)"></use><use href="#g566a_12" x="975" y="231" fill="rgb(192, 192, 192)"></use><use href="#g6570_12" x="750" y="281" fill="rgb(192, 192, 192)"></use><use href="#g5b57_12" x="762" y="281" fill="rgb(192, 192, 192)"></use><use href="#g70b9_12" x="774" y="281" fill="rgb(192, 192, 192)"></use><use href="#g6d4b_12" x="786" y="281" fill="rgb(192, 192, 192)"></use><use href="#g5149_12" x="798" y="281" fill="rgb(192, 192, 192)"></use><use href="#g767d_12" x="836" y="281" fill="rgb(192, 192, 192)"></use><use href="#g5e73_12" x="846" y="281" fill="rgb(192, 192, 192)"></use><use href="#g8861_12" x="858" y="281" fill="rgb(192, 192, 192)"></use><use href="#g4e00_12" x="870" y="285" fill="rgb(192, 192, 192)"></use><use href="#g6307_12" x="882" y="281" fill="rgb(192, 192, 192)"></use><use href="#g952e_12" x="894" y="281" fill="rgb(192, 192, 192)"></use><use href="#g57fa_14" x="733" y="319" fill="rgb(196, 196, 196)"></use><use href="#g672c_14" x="747" y="319" fill="rgb(196, 196, 196)"></use><use href="#g91cd_12" x="977" y="356" fill="rgb(192, 192, 192)"></use><use href="#g7f6e_12" x="989" y="356" fill="rgb(192, 192, 192)"></use><use href="#g4eae_12" x="730" y="379" fill="rgb(192, 192, 192)"></use><use href="#g5ea6_12" x="766" y="379" fill="rgb(192, 192, 192)"></use><use href="#g30_12" x="990" y="380" fill="rgb(200, 200, 200)"></use><use href="#g5bf9_12" x="730" y="409" fill="rgb(192, 192, 192)"></use><use href="#g6bd4_12" x="749" y="409" fill="rgb(192, 192, 192)"></use><use href="#g5ea6_12" x="766" y="409" fill="rgb(192, 192, 192)"></use><use href="#g30_12" x="990" y="410" fill="rgb(200, 200, 200)"></use><use href="#g8272_12" x="730" y="439" fill="rgb(192, 192, 192)"></use><use href="#g76f8_12" x="766" y="439" fill="rgb(192, 192, 192)"></use><use href="#g30_12" x="990" y="440" fill="rgb(200, 200, 200)"></use><use href="#g9971_12" x="730" y="469" fill="rgb(192, 192, 192)"></use><use href="#g548c_12" x="748" y="469" fill="rgb(192, 192, 192)"></use><use href="#g5ea6_12" x="766" y="469" fill="rgb(192, 192, 192)"></use><use href="#g30_12" x="990" y="470" fill="rgb(200, 200, 200)"></use><use href="#g6570_14" x="733" y="513" fill="rgb(196, 196, 196)"></use><use href="#g7801_14" x="747" y="514" fill="rgb(196, 196, 196)"></use><use href="#g8865_14" x="761" y="513" fill="rgb(196, 196, 196)"></use><use href="#g5149_14" x="775" y="513" fill="rgb(196, 196, 196)"></use><use href="#g6570_14" x="733" y="546" fill="rgb(196, 196, 196)"></use><use href="#g7801_14" x="747" y="547" fill="rgb(196, 196, 196)"></use><use href="#g51cf_14" x="761" y="546" fill="rgb(196, 196, 196)"></use><use href="#g5149_14" x="775" y="546" fill="rgb(196, 196, 196)"></use><use href="#g6e05_14" x="733" y="579" fill="rgb(196, 196, 196)"></use><use href="#g6670_14" x="747" y="579" fill="rgb(196, 196, 196)"></use><use href="#g5ea6_14" x="761" y="579" fill="rgb(196, 196, 196)"></use><use href="#g8272_14" x="733" y="612" fill="rgb(196, 196, 196)"></use><use href="#g9636_14" x="747" y="612" fill="rgb(196, 196, 196)"></use><g clip-path="url(#cl0)"><use href="#g66f2_14" x="734" y="645" fill="rgb(196, 196, 196)"></use><use href="#g7ebf_14" x="747" y="645" fill="rgb(196, 196, 196)"></use></g><use href="#g4e0a_12" x="19" y="665" fill="rgb(190, 190, 190)"></use><use href="#g4e00_12" x="31" y="669" fill="rgb(190, 190, 190)"></use><use href="#g5f20_12" x="43" y="665" fill="rgb(190, 190, 190)"></use><use href="#g4e0b_12" x="77" y="666" fill="rgb(190, 190, 190)"></use><use href="#g4e00_12" x="89" y="669" fill="rgb(190, 190, 190)"></use><use href="#g5f20_12" x="101" y="665" fill="rgb(190, 190, 190)"></use><use href="#g5220_12" x="139" y="665" fill="rgb(190, 190, 190)"></use><use href="#g9664_12" x="151" y="665" fill="rgb(190, 190, 190)"></use><use href="#g56fe_12" x="366" y="665" fill="rgb(190, 190, 190)"></use><use href="#g7247_12" x="377" y="665" fill="rgb(190, 190, 190)"></use><use href="#g4fe1_12" x="389" y="665" fill="rgb(190, 190, 190)"></use><use href="#g606f_12" x="401" y="665" fill="rgb(190, 190, 190)"></use><use href="#g5bf9_12" x="449" y="665" fill="rgb(190, 190, 190)"></use><use href="#g6bd4_12" x="462" y="665" fill="rgb(190, 190, 190)"></use><use href="#g5168_12" x="512" y="665" fill="rgb(190, 190, 190)"></use><use href="#g5c4f_12" x="524" y="665" fill="rgb(190, 190, 190)"></use><use href="#g9002_12" x="575" y="665" fill="rgb(190, 190, 190)"></use><use href="#g5c4f_12" x="587" y="665" fill="rgb(190, 190, 190)"></use><use href="#g539f_12" x="638" y="665" fill="rgb(190, 190, 190)"></use><use href="#g5927_12" x="650" y="665" fill="rgb(190, 190, 190)"></use><use href="#g5c55_12" x="938" y="664" fill="rgb(190, 190, 190)"></use><use href="#g5f00_12" x="950" y="664" fill="rgb(190, 190, 190)"></use><use href="#g28_12" x="963" y="664" fill="rgb(190, 190, 190)"></use><use href="#g30_12" x="968" y="666" fill="rgb(190, 190, 190)"></use><use href="#g29_12" x="975" y="664" fill="rgb(190, 190, 190)"></use></svg></body></html>
